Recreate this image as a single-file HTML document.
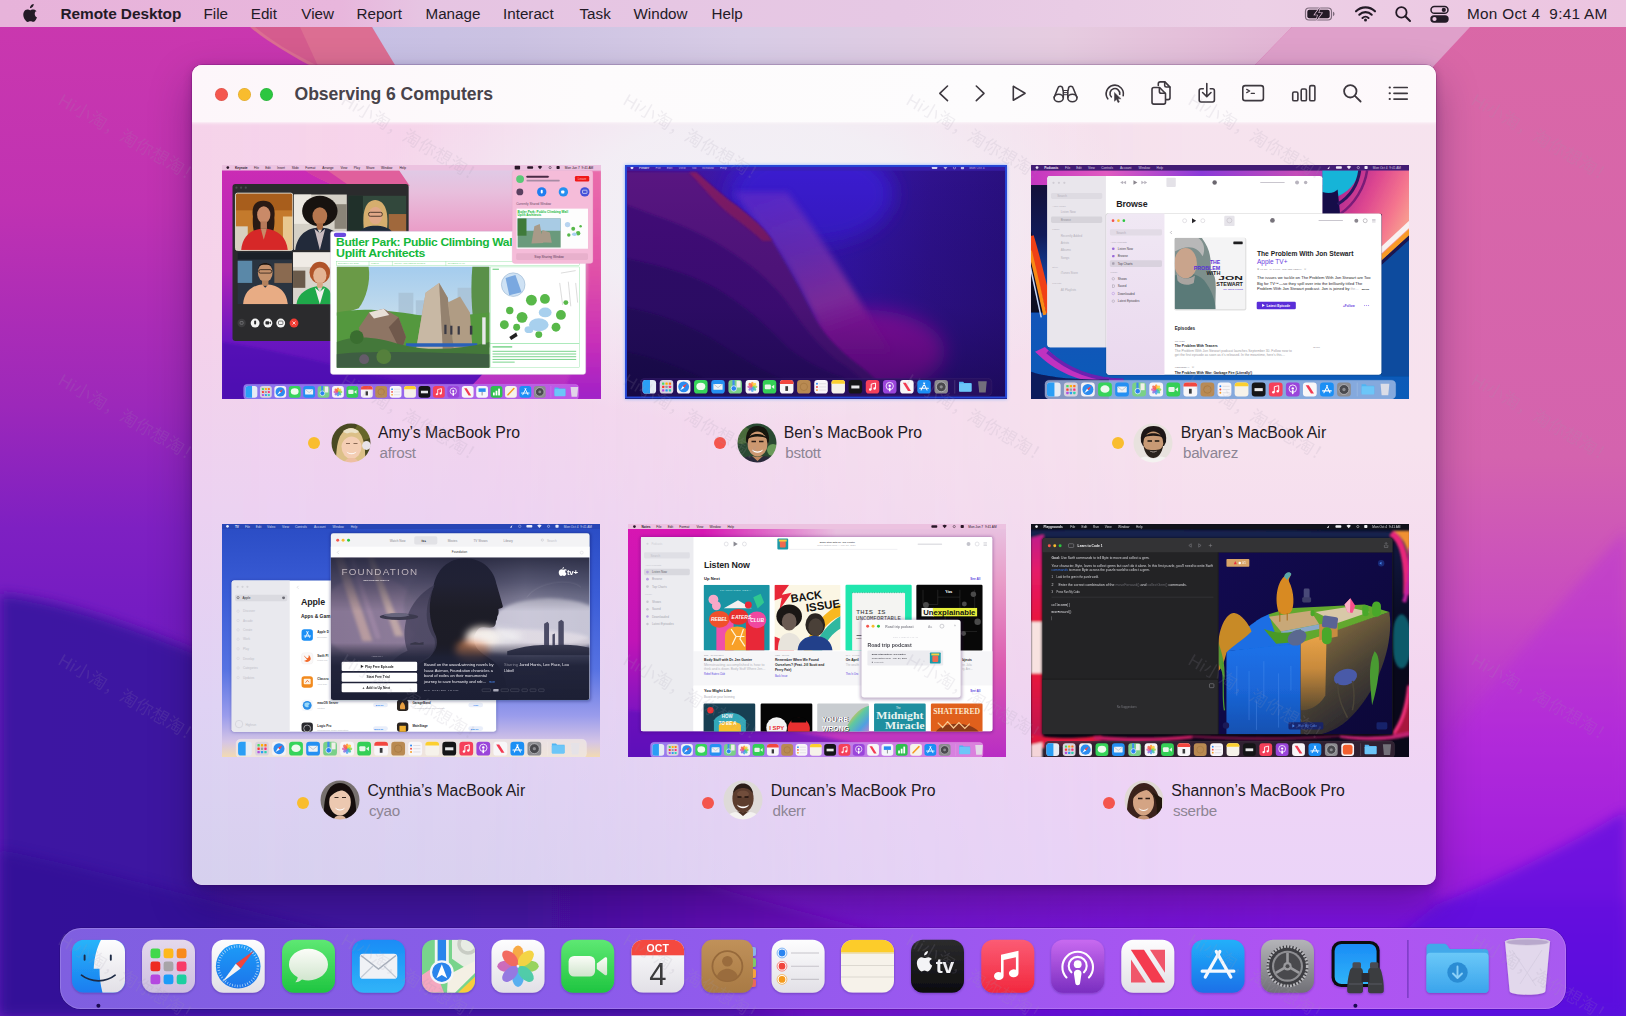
<!DOCTYPE html>
<html lang="en">
<head>
<meta charset="utf-8">
<title>Remote Desktop — Observing 6 Computers</title>
<style>
html,body{margin:0;padding:0;}
body{width:1626px;height:1016px;overflow:hidden;position:relative;background:#7a1fc0;font-family:"Liberation Sans","Noto Sans CJK SC",sans-serif;color:#1d1d1f;}
.abs{position:absolute;}
svg{display:block;}
svg{font-family:"Liberation Sans","Noto Sans CJK SC",sans-serif;}
#wall{position:absolute;left:0;top:0;width:1626px;height:1016px;}
#menubar{position:absolute;left:0;top:0;width:1626px;height:27px;background:linear-gradient(90deg,#e7b3da 0,#e8b6dc 340px,#e6c4e2 420px,#e6c8e4 900px,#ecd0e6 1250px,#ecc4e0 1626px);}
#menubar span{position:absolute;top:0;height:27px;line-height:28px;font-size:15.200px;color:#231a26;white-space:nowrap;}
#win{position:absolute;left:192px;top:65px;width:1244px;height:820px;border-radius:10px;overflow:hidden;background:linear-gradient(180deg,#f6e3ee 0,#f7e2ee 380px,#f3d6f0 620px,#eed4f6 720px,#ebd4f8 820px);box-shadow:0 0 0 .5px rgba(60,0,80,.35),0 18px 40px rgba(30,0,60,.35),0 2px 8px rgba(30,0,60,.25);}
#winL{position:absolute;left:0;top:0;width:1244px;height:820px;background:linear-gradient(180deg,#f6d3ea 0,#f5d2ea 250px,#ecd1f1 440px,#dfd2f4 640px,#d6d0ee 820px);-webkit-mask-image:linear-gradient(90deg,#000 0,rgba(0,0,0,.85) 300px,rgba(0,0,0,.35) 640px,transparent 1000px);mask-image:linear-gradient(90deg,#000 0,rgba(0,0,0,.85) 300px,rgba(0,0,0,.35) 640px,transparent 1000px);}
#winC{position:absolute;left:180px;top:-60px;width:760px;height:420px;background:radial-gradient(closest-side,rgba(242,241,246,.98) 0,rgba(242,241,246,.85) 45%,rgba(242,241,246,0) 100%);}
#tbar{position:absolute;left:0;top:0;width:1244px;height:57px;background:linear-gradient(90deg,#fdf6fa 0,#fdfbfc 400px,#fdfcfd 800px,#fdf8fb 1244px);box-shadow:0 0 3px 1px rgba(253,248,251,.9);}
.tl{position:absolute;top:22.5px;width:13px;height:13px;border-radius:50%;}
#title{position:absolute;left:102.500px;top:.800px;height:58px;line-height:57px;font-size:17.600px;font-weight:700;color:#48434a;letter-spacing:-.04px;white-space:nowrap;}
.thumb{position:absolute;overflow:hidden;}
.lbl{position:absolute;white-space:nowrap;}
.lbl .dot{position:absolute;width:12px;height:12px;border-radius:50%;}
.lbl .nm{position:absolute;font-size:15.800px;line-height:20px;color:#1f1a24;}
.lbl .us{position:absolute;font-size:15.200px;line-height:20px;color:#8d8594;letter-spacing:-.3px;}
.wm{position:absolute;font-size:17.5px;line-height:20px;color:rgba(160,154,176,.15);transform:rotate(30.200deg);transform-origin:0 0;white-space:nowrap;letter-spacing:.4px;font-family:"Liberation Sans","Noto Sans CJK SC",sans-serif;}
#wms{position:absolute;left:0;top:0;width:1626px;height:1016px;overflow:hidden;pointer-events:none;}
#dock{position:absolute;left:60px;top:927.500px;width:1505.500px;height:81.500px;border-radius:21px;background:linear-gradient(90deg,#7f5fe0 0,#8a5cea 500px,#9c58f0 900px,#b053f2 1250px,#a85af0 1506px);box-shadow:inset 0 0 0 1px rgba(255,255,255,.16),0 0 0 .5px rgba(20,0,60,.3);}
.ic{position:absolute;top:939px;width:54px;height:54px;}
</style>
</head>
<body>
<svg id="wall" viewBox="0 0 1626 1016">
<defs>
<linearGradient id="wgL" x1="0" y1="0" x2="0" y2="1">
<stop offset="0" stop-color="#cb38ae"/><stop offset=".2" stop-color="#c032b2"/><stop offset=".4" stop-color="#9c28ba"/><stop offset=".52" stop-color="#7e20c2"/><stop offset=".6" stop-color="#751cc2"/><stop offset="1" stop-color="#6a16c0"/>
</linearGradient>
<linearGradient id="wgR" x1="0" y1="0" x2="0" y2="1">
<stop offset="0" stop-color="#da68a6"/><stop offset=".45" stop-color="#d463ae"/><stop offset=".6" stop-color="#c84cc0"/><stop offset=".72" stop-color="#b22ed6"/><stop offset=".84" stop-color="#9a1cdc"/><stop offset=".92" stop-color="#7410dc"/><stop offset="1" stop-color="#5a10dc"/>
</linearGradient>
<linearGradient id="wmask" x1="0" y1="0" x2="1" y2="0">
<stop offset=".35" stop-color="#000"/><stop offset=".8" stop-color="#fff"/>
</linearGradient>
<mask id="mR"><rect width="1626" height="1016" fill="url(#wmask)"/></mask>
<filter id="b6" filterUnits="userSpaceOnUse" x="-50" y="-50" width="1726" height="1116"><feGaussianBlur stdDeviation="6"/></filter>
<filter id="b2" filterUnits="userSpaceOnUse" x="-50" y="-50" width="1726" height="1116"><feGaussianBlur stdDeviation="1.2"/></filter>
<filter id="b20" filterUnits="userSpaceOnUse" x="-50" y="-50" width="1726" height="1116"><feGaussianBlur stdDeviation="20"/></filter>
<linearGradient id="wgD" x1="0" y1="0" x2="1" y2="0">
<stop offset="0" stop-color="#3c16a2"/><stop offset=".45" stop-color="#42129f"/><stop offset=".6" stop-color="#5a10ae"/><stop offset=".75" stop-color="#6e0ebe"/><stop offset="1" stop-color="#6a10d0" stop-opacity="0"/>
</linearGradient>
<linearGradient id="wgD2" x1="0" y1="0" x2="0" y2="1">
<stop offset="0" stop-color="#3c16a2" stop-opacity="0"/><stop offset="1" stop-color="#2a1090" stop-opacity=".75"/>
</linearGradient>
<linearGradient id="wgTop" x1="0" y1="0" x2="1" y2="0">
<stop offset="0" stop-color="#c7c0e4"/><stop offset=".15" stop-color="#cbc2e2"/><stop offset=".4" stop-color="#d8cce6"/><stop offset=".75" stop-color="#e6cce0"/><stop offset="1" stop-color="#e2b4d4"/>
</linearGradient>
</defs>
<rect width="1626" height="1016" fill="url(#wgL)"/>
<rect width="1626" height="1016" fill="url(#wgR)" mask="url(#mR)"/>
<!-- dark indigo wave bottom-left -->
<path d="M0 594 C60 600 130 625 192 650 C400 730 600 860 760 900 C900 940 1000 960 1150 1016 L0 1016Z" fill="url(#wgD)" filter="url(#b6)"/>
<path d="M0 850 C100 870 200 900 330 930 C500 970 700 1000 800 1016 L0 1016Z" fill="#2e1192" opacity=".6" filter="url(#b6)"/>
<!-- right diag glow -->
<path d="M1626 530 C1560 600 1480 700 1436 760 L1436 900 L1626 900Z" fill="#b428e0" opacity=".35" filter="url(#b6)"/>
<path d="M1436 905 C1500 880 1580 840 1626 810 L1626 1016 L1300 1016Z" fill="#5a10e0" opacity=".7" filter="url(#b6)"/>
<!-- top strip features -->
<path d="M250 27 C265 40 290 55 318 70 L400 70 L372 27Z" fill="#dc6e92"/>
<path d="M255 27 C270 40 290 52 318 66 L300 27Z" fill="#d0508c" opacity=".6"/>
<path d="M372 27 L398 70 L1250 70 L1292 27Z" fill="url(#wgTop)"/>
<path d="M1292 27 L1250 70 L1430 70 L1470 27Z" fill="#dfa0ca"/>
</svg>
<div id="menubar">
<svg class="abs" style="left:22px;top:3.500px" width="16.800" height="20" viewBox="0 0 16 19"><path fill="#231a26" d="M11.1 0c.1 1-.3 2-.9 2.700-.7.800-1.700 1.300-2.600 1.200-.1-1 .4-2 .9-2.600C9.200.5 10.300.05 11.100 0zM13.900 6.300c-.1.100-1.800 1-1.800 3.100 0 2.400 2.100 3.200 2.200 3.300 0 .1-.3 1.200-1.100 2.300-.7 1-1.400 2-2.500 2s-1.400-.6-2.600-.6c-1.200 0-1.600.6-2.600.7-1.100 0-1.900-1.100-2.600-2.100C1.500 13 .5 9.700 1.900 7.300c.7-1.200 1.900-1.900 3.200-2 1 0 2 .7 2.600.7.600 0 1.800-.8 3-.7.500 0 2 .2 3 1.600z"/></svg>
<span style="left:60.5px;font-weight:700;font-size:15.400px;letter-spacing:-.05px">Remote Desktop</span>
<span style="left:203.500px">File</span>
<span style="left:250.800px">Edit</span>
<span style="left:301.300px">View</span>
<span style="left:356.500px">Report</span>
<span style="left:425.500px">Manage</span>
<span style="left:503px">Interact</span>
<span style="left:579.500px">Task</span>
<span style="left:633.500px">Window</span>
<span style="left:711.500px">Help</span>
<!-- battery -->
<svg class="abs" style="left:1304px;top:6px" width="34" height="16" viewBox="0 0 34 16"><rect x="1.500" y="2" width="26" height="12" rx="3.500" fill="none" stroke="#231a26" stroke-opacity=".55" stroke-width="1.200"/><rect x="3.300" y="3.800" width="22.400" height="8.400" rx="2" fill="#231a26"/><path d="M29 5.800v4.400c.9-.3 1.500-1.200 1.500-2.200s-.6-1.900-1.500-2.200z" fill="#231a26" fill-opacity=".55"/><path d="M15.800 1.500 10.600 8.700h3.300l-1.600 5.800 5.500-7.400h-3.400z" fill="#231a26" stroke="#e9c8e2" stroke-width="1.300" paint-order="stroke"/></svg>
<!-- wifi -->
<svg class="abs" style="left:1354px;top:5px" width="23" height="17" viewBox="0 0 23 17"><g fill="none" stroke="#231a26" stroke-width="2.100" stroke-linecap="round"><path d="M2 6.300a13.400 13.400 0 0 1 19 0"/><path d="M5.300 9.700a8.800 8.800 0 0 1 12.400 0"/><path d="M8.500 12.900a4.300 4.300 0 0 1 6 0"/></g><circle cx="11.500" cy="15" r="1.500" fill="#231a26"/></svg>
<!-- search -->
<svg class="abs" style="left:1394px;top:5px" width="18" height="18" viewBox="0 0 18 18"><circle cx="7.400" cy="7.400" r="5.200" fill="none" stroke="#231a26" stroke-width="1.800"/><path d="M11.300 11.300 16 16" stroke="#231a26" stroke-width="2" stroke-linecap="round"/></svg>
<!-- control center -->
<svg class="abs" style="left:1430px;top:5px" width="19" height="18" viewBox="0 0 19 18"><rect x="1" y="1.500" width="17" height="6.800" rx="3.400" fill="none" stroke="#231a26" stroke-width="1.500"/><circle cx="13.800" cy="4.900" r="2.100" fill="#231a26"/><rect x=".3" y="10.300" width="18.400" height="7.400" rx="3.700" fill="#231a26"/><circle cx="4.500" cy="14" r="2.100" fill="#ecc8e2"/></svg>
<span style="left:1467px;font-size:15.300px;letter-spacing:.3px">Mon Oct 4&nbsp; 9:41 AM</span>
</div>
<div id="win">
<div id="winL"></div><div id="winC"></div>
<div id="tbar">
<div class="tl" style="left:23px;background:#f4574e;box-shadow:inset 0 0 0 .5px rgba(0,0,0,.12)"></div>
<div class="tl" style="left:45.500px;background:#f8bc2e;box-shadow:inset 0 0 0 .5px rgba(0,0,0,.12)"></div>
<div class="tl" style="left:68px;background:#2cc640;box-shadow:inset 0 0 0 .5px rgba(0,0,0,.12)"></div>
<div id="title">Observing 6 Computers</div>
<svg class="abs" style="left:730px;top:10px" width="500" height="40" viewBox="922 75 500 40" fill="none" stroke="#3d383f" stroke-width="1.600" stroke-linecap="round" stroke-linejoin="round">
<path d="M947.500 86 939.800 93.300 947.500 100.600"/>
<path d="M976.300 86 984 93.300 976.300 100.600"/>
<path d="M1013.300 86.300v14l11.800-7z"/>
<!-- binoculars -->
<g><ellipse cx="1058.700" cy="98" rx="4.600" ry="3.700"/><ellipse cx="1072.400" cy="98" rx="4.600" ry="3.700"/><path d="M1054.200 97.200 1058.300 87.200c.4-1.300 3.600-1.300 4 0l1 4.500v5.800"/><path d="M1076.900 97.200 1072.800 87.200c-.4-1.300-3.600-1.300-4 0l-1 4.500v5.800"/><path d="M1063.400 90.500h4.400M1063.400 92.600h4.400M1063.400 94.700h4.400" stroke-width="1"/></g>
<!-- control cursor -->
<g><path d="M1107.800 98.800a8.600 8.600 0 1 1 15.400-3.200"/><path d="M1111.300 96.800a4.900 4.900 0 1 1 8.400-2.500"/><path d="M1114.500 92.800v8.400l2-1.900 1.500 3.300 1.400-.6-1.500-3.200h2.800z" fill="#3d383f" stroke-width=".5"/></g>
<!-- copy -->
<g><path d="M1158.300 85.500v-1.700c0-1.100.8-1.900 1.900-1.900h4.700l5.100 5.200v10.600c0 1.100-.8 1.900-1.900 1.900h-1.900"/><path d="M1164.700 82v3.400c0 .9.700 1.600 1.600 1.600h3.500"/><path d="M1153.900 87.500h5.700l5.900 6v8.700c0 1.100-.8 1.900-1.900 1.900h-9.700c-1.100 0-1.900-.8-1.900-1.900V89.400c0-1.100.8-1.900 1.900-1.900z" fill="#fcf7fb"/><path d="M1159.400 87.700v3.800c0 1 .8 1.800 1.800 1.800h4"/></g>
<!-- download -->
<g><path d="M1203.300 88.800h-2.200c-1.100 0-1.900.8-1.900 1.900v9.400c0 1.100.8 1.900 1.900 1.900h11.400c1.100 0 1.900-.8 1.900-1.900v-9.400c0-1.100-.8-1.900-1.900-1.900h-2.200"/><path d="M1206.800 83.500v12.800M1202.600 92.500l4.200 4.100 4.200-4.100"/></g>
<!-- terminal -->
<g><rect x="1242.800" y="85.600" width="20.600" height="15" rx="2.400"/><path d="M1246.700 89.400 1249.700 91 1246.700 92.600M1251.200 93.400h3.200" stroke-width="1.200"/></g>
<!-- bars -->
<g><rect x="1292.700" y="92" width="5.200" height="8.800" rx="1.400"/><rect x="1301.200" y="89" width="5.200" height="11.800" rx="1.400"/><rect x="1309.700" y="85.600" width="5.200" height="15.200" rx="1.400"/></g>
<!-- search -->
<g stroke-width="1.800"><circle cx="1350.300" cy="91.300" r="6.200"/><path d="M1354.900 95.900 1360.600 101.500"/></g>
<!-- list -->
<g stroke-width="1.700"><path d="M1394 87.500h13.200M1394 93.300h13.200M1394 99.100h13.200"/><path d="M1389.600 87.500h.3M1389.600 93.300h.3M1389.600 99.100h.3" stroke-width="2"/></g>
</svg>
</div>
<div class="thumb" style="left:30.400px;top:100px;width:379px;height:233.500px;">
<svg width="379" height="233.500" viewBox="42.300 40.650 1540.600 949.200" preserveAspectRatio="none">
<defs>
<linearGradient id="t1a" x1="0" y1="0" x2="0" y2="1"><stop offset="0" stop-color="#cc2cb4"/><stop offset=".45" stop-color="#b024b8"/><stop offset=".75" stop-color="#6a16c0"/><stop offset="1" stop-color="#5210b4"/></linearGradient>
<linearGradient id="t1b" gradientUnits="userSpaceOnUse" x1="0" y1="40" x2="0" y2="992"><stop offset="0" stop-color="#decce8"/><stop offset=".12" stop-color="#e8bedc"/><stop offset=".28" stop-color="#ea9ec8"/><stop offset=".5" stop-color="#e070b0"/><stop offset=".75" stop-color="#cc48b8"/><stop offset="1" stop-color="#b028c8"/></linearGradient>
<linearGradient id="t1sky" x1="0" y1="0" x2="0" y2="1"><stop offset="0" stop-color="#a4ccee"/><stop offset=".5" stop-color="#c4dcec"/><stop offset="1" stop-color="#a4c0b4"/></linearGradient>
<linearGradient id="t1dk" x1="0" y1="0" x2="1" y2="0"><stop offset="0" stop-color="#8e80f4"/><stop offset=".5" stop-color="#a070f0"/><stop offset="1" stop-color="#c45ce8"/></linearGradient>
<linearGradient id="t1rs" gradientUnits="userSpaceOnUse" x1="0" y1="62" x2="0" y2="992"><stop offset="0" stop-color="#ea6caa"/><stop offset=".45" stop-color="#e050a8"/><stop offset=".75" stop-color="#c830b8"/><stop offset="1" stop-color="#a020c8"/></linearGradient>
<filter id="t1f" filterUnits="userSpaceOnUse" x="0" y="0" width="1640" height="1030"><feGaussianBlur stdDeviation="5"/></filter>
<filter id="t1g" filterUnits="userSpaceOnUse" x="0" y="0" width="1640" height="1030"><feGaussianBlur stdDeviation="2.500"/></filter>
<clipPath id="t1c1"><rect x="97" y="155" width="233" height="233" rx="8"/></clipPath>
<clipPath id="t1c2"><rect x="335" y="160" width="215" height="226"/></clipPath>
<clipPath id="t1c3"><rect x="555" y="165" width="237" height="150"/></clipPath>
<clipPath id="t1c4"><rect x="105" y="395" width="222" height="212"/></clipPath>
<clipPath id="t1c5"><rect x="331" y="395" width="155" height="212"/></clipPath>
<clipPath id="t1c6"><rect x="508" y="453" width="622" height="412"/></clipPath>
</defs>
<rect x="40" y="40" width="1546" height="952" fill="url(#t1a)"/>
<path d="M420 60 C460 100 520 120 600 200 C700 300 780 330 860 350 L1586 350 L1586 40 L420 40Z" fill="url(#t1b)"/>
<path d="M860 300 L1586 300 L1586 992 L1000 992 C1100 900 1200 800 1250 640 C1100 560 950 450 860 300Z" fill="url(#t1b)"/>
<path d="M380 62 C420 90 460 105 500 125 L805 125 L762 62Z" fill="#e0609c"/><path d="M380 62 C420 90 460 105 500 125 L560 125 L470 62Z" fill="#d23ca4"/>
<path d="M42 760 C300 800 700 900 1000 992 L42 992Z" fill="#4a0eb0" opacity=".6" filter="url(#t1f)"/>
<path d="M1500 62 L1586 62 L1586 992 L1420 992 C1500 800 1540 600 1530 440Z" fill="url(#t1rs)" filter="url(#t1f)"/>
<!-- menubar -->
<rect x="40" y="40" width="1546" height="23" fill="#ecc2e0"/>
<g font-size="13" fill="#2a1828"><circle cx="66" cy="51" r="5.500"/><text x="95" y="56" font-weight="700">Keynote</text><text x="172" y="56">File</text><text x="218" y="56">Edit</text><text x="266" y="56">Insert</text><text x="326" y="56">Slide</text><text x="381" y="56">Format</text><text x="450" y="56">Arrange</text><text x="524" y="56">View</text><text x="578" y="56">Play</text><text x="628" y="56">Share</text><text x="689" y="56">Window</text><text x="764" y="56">Help</text><text x="1436" y="56">Mon Jun 7&#160; 9:41 AM</text><rect x="1232" y="44" width="22" height="15" rx="3"/><rect x="1283" y="46" width="24" height="10" rx="3"/><path d="M1326 48a13 13 0 0 1 18 0l-9 10z"/><circle cx="1376" cy="51" r="4.500" fill="none" stroke="#2a1828" stroke-width="2"/><rect x="1402" y="45" width="13" height="12" rx="3"/></g>
<!-- FaceTime window -->
<rect x="85" y="118" width="716" height="638" rx="12" fill="#2b2b2d"/>
<circle cx="101" cy="133" r="4.500" fill="#4a4a4c"/><circle cx="120" cy="133" r="4.500" fill="#4a4a4c"/><circle cx="139" cy="133" r="4.500" fill="#4a4a4c"/>
<g clip-path="url(#t1c1)"><rect x="97" y="155" width="233" height="233" fill="#c47a2c"/><rect x="97" y="155" width="233" height="70" fill="#a85e1c"/><rect x="97" y="290" width="50" height="98" fill="#d8d0c0"/><rect x="290" y="250" width="40" height="138" fill="#e8c890"/>
<path d="M168 250 C160 200 185 185 212 186 C240 186 262 205 255 255 C258 290 250 320 240 335 L182 335 C172 320 165 290 168 250Z" fill="#2a1a14"/><ellipse cx="212" cy="243" rx="27" ry="35" fill="#c98a68"/><rect x="199" y="270" width="26" height="30" fill="#b87a5a"/>
<path d="M120 388 C125 330 160 305 200 300 L212 330 L225 300 C265 305 305 330 310 388Z" fill="#d62828"/><path d="M200 300 L212 345 L225 300Z" fill="#c98a68"/></g>
<rect x="97" y="155" width="233" height="233" rx="8" fill="none" stroke="#e8e4dc" stroke-width="3.500"/>
<g clip-path="url(#t1c2)"><rect x="335" y="160" width="215" height="226" fill="#d4d0c6"/><rect x="335" y="160" width="70" height="120" fill="#ece8e0"/><rect x="500" y="200" width="50" height="100" fill="#8a8478"/>
<ellipse cx="440" cy="228" rx="72" ry="62" fill="#17120f"/><ellipse cx="440" cy="248" rx="30" ry="36" fill="#b5764e"/><rect x="427" y="278" width="26" height="26" fill="#a56842"/>
<path d="M340 386 C350 320 390 300 428 296 L440 320 L452 296 C495 300 535 322 545 386Z" fill="#222a3a"/><path d="M418 300 L440 386 L462 300 L440 318Z" fill="#c8bcc0"/></g>
<g clip-path="url(#t1c3)"><rect x="555" y="165" width="237" height="150" fill="#32483c"/><rect x="555" y="165" width="60" height="150" fill="#20302a"/><rect x="720" y="240" width="72" height="75" fill="#a0683c"/>
<path d="M620 310 C610 230 625 185 665 183 C705 185 722 230 712 310Z" fill="#d6ae6e"/><ellipse cx="666" cy="246" rx="28" ry="36" fill="#e0a888"/><rect x="638" y="233" width="56" height="16" rx="7" fill="none" stroke="#3a2a20" stroke-width="3.500"/><path d="M600 315 C610 295 640 288 666 288 C692 288 725 295 735 315Z" fill="#1e2a3a"/></g>
<g clip-path="url(#t1c4)"><rect x="105" y="395" width="222" height="212" fill="#2a3440"/><rect x="105" y="430" width="60" height="90" fill="#5a88a8"/><rect x="255" y="440" width="72" height="80" fill="#8a6a50"/><rect x="105" y="395" width="222" height="30" fill="#1a2028"/>
<ellipse cx="218" cy="478" rx="30" ry="38" fill="#c4916c"/><path d="M188 465 C188 430 248 430 248 465 L244 452 C230 444 206 444 192 452Z" fill="#1a1410"/><rect x="192" y="466" width="52" height="14" rx="6" fill="none" stroke="#1a1410" stroke-width="3"/><rect x="205" y="510" width="26" height="22" fill="#b4815c"/>
<path d="M128 607 C132 550 170 530 205 526 L218 540 L231 526 C268 530 305 550 310 607Z" fill="#e8ac84"/></g>
<g clip-path="url(#t1c5)"><rect x="331" y="395" width="155" height="212" fill="#d8d4cc"/><rect x="331" y="395" width="155" height="60" fill="#f0ece6"/><rect x="331" y="470" width="50" height="70" fill="#6a5a4a"/>
<ellipse cx="440" cy="478" rx="42" ry="44" fill="#b0542a"/><ellipse cx="440" cy="490" rx="27" ry="33" fill="#e4b494"/><rect x="428" y="518" width="24" height="22" fill="#d8a684"/>
<path d="M345 607 C350 560 395 540 428 534 L440 560 L452 534 C480 540 490 560 490 607Z" fill="#1fa84a"/><path d="M420 540 L440 607 L460 540 L440 556Z" fill="#f2f0ee"/></g>
<circle cx="122" cy="683" r="17" fill="#3c3c3e"/><circle cx="177" cy="683" r="18" fill="#f4f4f4"/><circle cx="229" cy="683" r="18" fill="#f4f4f4"/><circle cx="281" cy="683" r="18" fill="#f4f4f4"/><circle cx="335" cy="683" r="18" fill="#f03c34"/>
<g fill="#2b2b2d"><rect x="173" y="673" width="8" height="16" rx="4"/><rect x="219" y="676" width="15" height="13" rx="3"/><path d="M234 682l7-5v11z"/><rect x="272" y="675" width="18" height="14" rx="3" fill="none" stroke="#2b2b2d" stroke-width="2.500"/></g><path d="M329 677l12 12M341 677l-12 12" stroke="#fff" stroke-width="3"/><rect x="116" y="677" width="12" height="11" rx="2" fill="none" stroke="#9a9a9e" stroke-width="2"/>
<!-- Keynote window -->
<rect x="483" y="310" width="1038" height="582" rx="10" fill="#fff" stroke="#c8b0d0" stroke-width="1.500"/>
<rect x="497" y="316" width="50" height="17" rx="8" fill="#6a48e0"/>
<g font-weight="700" fill="#16b83a" font-size="43" letter-spacing="-1.200"><text x="506" y="371" textLength="716" lengthAdjust="spacingAndGlyphs">Butler Park: Public Climbing Wal</text><text x="506" y="414" textLength="362" lengthAdjust="spacingAndGlyphs">Uplift Architects</text></g>
<rect x="1222" y="310" width="300" height="130" fill="#fff"/>
<g fill="none" stroke="#7adb90" stroke-width="1.500"><rect x="508" y="432" width="988" height="18"/><path d="M640 432v18M735 432v18M952 432v18"/><rect x="1135" y="455" width="361" height="310"/><rect x="1135" y="765" width="361" height="100"/></g>
<g font-size="9" fill="#6ad084"><text x="514" y="445">BUTLER PARK 2021</text><text x="648" y="445">PUBLIC</text><text x="742" y="445">UPLIFT ARCHITECTS STUDIO</text><text x="960" y="445">CLIMBING WALL</text></g>
<g clip-path="url(#t1c6)"><rect x="508" y="453" width="622" height="412" fill="url(#t1sky)"/>
<path d="M760 560h60v120h-60zM830 590h50v100h-50zM1000 540h70v160h-70zM940 600h50v100h-50z" fill="#a8c0d4" opacity=".8"/>
<path d="M508 453h130c10 60-10 130-40 170l-90 30z" fill="#6a9a46" filter="url(#t1g)"/><path d="M1060 453h70v330h-50c-20-100-30-220-20-330z" fill="#5a9048" filter="url(#t1g)"/>
<path d="M508 640c100-20 200-10 330 10c100 10 200 0 292-10v225H508z" fill="#54983e"/>
<path d="M600 700 L640 640 L700 625 L760 660 L790 740 L770 800 L600 790Z" fill="#8e7564"/><path d="M640 640 L700 625 L722 650 L660 665Z" fill="#e8e0d8"/><path d="M720 700L760 660L790 740L770 800Z" fill="#70594c"/>
<path d="M830 800 L870 560 L925 520 L960 580 L985 790Z" fill="#b8a694"/><path d="M870 560 L925 520 L940 790 L830 800Z" fill="#c8b8a4"/><path d="M925 520L960 580L985 790L940 790Z" fill="#94826f"/>
<path d="M960 600 L1010 575 L1050 640 L1060 780 L985 790Z" fill="#b09c84"/>
<path d="M790 765h290v14H790z" fill="#2a60b8"/>
<path d="M508 760c80-30 160-20 260 10c120 30 240 20 362-10v105H508z" fill="#44783a"/><path d="M508 810c100-14 300-10 622 0v55H508z" fill="#3e5e42"/>
<circle cx="590" cy="740" r="28" fill="#3a6e30"/><circle cx="700" cy="820" r="30" fill="#55803c"/><circle cx="620" cy="830" r="20" fill="#8a5a90" opacity=".5"/>
<g fill="#3a3a44"><rect x="946" y="690" width="9" height="38"/><rect x="970" y="694" width="9" height="36"/><rect x="1000" y="696" width="9" height="34"/><rect x="1050" y="694" width="10" height="36"/><rect x="1100" y="660" width="14" height="110" fill="#e8e8ea"/></g>
</g>
<!-- site plan -->
<g filter="url(#t1g)"><circle cx="1226" cy="527" r="48" fill="#cfe2f4" stroke="#8aa8c8" stroke-width="2"/><path d="M1195 500l40-12 25 70-50 12z" fill="#7aa8e0"/>
<g fill="#58b84a"><circle cx="1300" cy="590" r="22"/><circle cx="1355" cy="585" r="20"/><circle cx="1212" cy="632" r="15"/><circle cx="1262" cy="660" r="22"/><circle cx="1420" cy="650" r="20"/><circle cx="1190" cy="690" r="18"/><circle cx="1400" cy="700" r="18"/><circle cx="1330" cy="730" r="14"/><circle cx="1240" cy="700" r="14"/><circle cx="1440" cy="600" r="10"/></g>
<g fill="#a8d0ee"><ellipse cx="1356" cy="640" rx="26" ry="20"/><ellipse cx="1330" cy="690" rx="40" ry="26"/><ellipse cx="1290" cy="710" rx="18" ry="14"/></g>
<path d="M1210 740l28-18 6 14-26 16z" fill="#222"/><path d="M1415 520l12 90M1450 515l10 100M1480 520l8 80M1420 480l60-10" stroke="#b8b8b8" stroke-width="2" fill="none"/></g>
<g fill="#7ad48c"><rect x="1142" y="777" width="80" height="6"/><rect x="1142" y="796" width="340" height="4"/><rect x="1142" y="807" width="340" height="4"/><rect x="1142" y="818" width="340" height="4"/><rect x="1142" y="829" width="340" height="4"/><rect x="1142" y="840" width="90" height="4"/><rect x="1142" y="462" width="26" height="5"/></g>
<!-- SharePlay popup -->
<rect x="1222" y="63" width="328" height="378" rx="10" fill="#f5bcd9" stroke="#e8a4c8" stroke-width="1"/>
<circle cx="1254" cy="98" r="16" fill="#5cc878"/><rect x="1280" y="84" width="90" height="8" rx="2" fill="#4a2a44"/><rect x="1280" y="101" width="135" height="7" rx="2" fill="#a88aa4"/>
<rect x="1477" y="85" width="58" height="23" rx="5" fill="#f01818"/><text x="1488" y="102" font-size="13" fill="#fbb">Leave</text>
<circle cx="1253" cy="150" r="14" fill="#5a4060"/><circle cx="1342" cy="150" r="19" fill="#1f7df0"/><circle cx="1430" cy="150" r="19" fill="#2490f0"/><circle cx="1517" cy="150" r="19" fill="#4450d8"/><rect x="1338" y="141" width="8" height="15" rx="4" fill="#fff"/><rect x="1421" y="144" width="13" height="12" rx="3" fill="#fff"/><rect x="1508" y="143" width="18" height="13" rx="2" fill="none" stroke="#fff" stroke-width="2.500"/>
<text x="1238" y="203" font-size="12.500" fill="#6a4a68">Currently Shared Window</text>
<rect x="1240" y="218" width="290" height="163" fill="#fdfdfd"/><g font-weight="700" fill="#16b83a" font-size="12.500"><text x="1244" y="236" textLength="205" lengthAdjust="spacingAndGlyphs">Butler Park: Public Climbing Wall</text><text x="1244" y="249">Uplift Architects</text></g>
<rect x="1244" y="258" width="175" height="118" fill="#6a9a7c"/><rect x="1244" y="258" width="175" height="50" fill="#a8cbe4"/><path d="M1300 360l12-70 22-10 14 78zM1335 355l10-50 30 10 8 42z" fill="#a89a88"/><rect x="1244" y="258" width="36" height="70" fill="#3f7a3a"/>
<g fill="#58b84a"><circle cx="1470" cy="300" r="8"/><circle cx="1490" cy="318" r="9"/><circle cx="1452" cy="325" r="7"/><circle cx="1500" cy="290" r="5"/></g><circle cx="1447" cy="283" r="11" fill="#b8d4f0"/><ellipse cx="1475" cy="322" rx="10" ry="7" fill="#a8d0ee"/>
<rect x="1238" y="399" width="292" height="28" rx="6" fill="#e8b0cc"/><text x="1312" y="418" font-size="12.500" fill="#5a3a58">Stop Sharing Window</text>
<!-- dock -->
<rect x="130" y="932" width="1362" height="62" rx="15" fill="url(#t1dk)" fill-opacity=".9" stroke="#fff" stroke-opacity=".3" stroke-width="1.500"/>
<rect x="138" y="939" width="48" height="48" rx="11" fill="#e6ecf4"/><path d="M149 939h15.4v48h-15.4a11 11 0 0 1 -11 -11v-25.9a11 11 0 0 1 11 -11z" fill="#2a9ef5"/><rect x="196.6" y="939" width="48" height="48" rx="11" fill="#d9d3de"/><rect x="204.8" y="947.2" width="8.2" height="8.2" rx="1.9" fill="#4cd964"/><rect x="216.8" y="947.2" width="8.2" height="8.2" rx="1.9" fill="#ffb400"/><rect x="228.8" y="947.2" width="8.2" height="8.2" rx="1.9" fill="#ff7a1a"/><rect x="204.8" y="959.2" width="8.2" height="8.2" rx="1.9" fill="#ff3b30"/><rect x="216.8" y="959.2" width="8.2" height="8.2" rx="1.9" fill="#9a9aa0"/><rect x="228.8" y="959.2" width="8.2" height="8.2" rx="1.9" fill="#ff2d78"/><rect x="204.8" y="971.2" width="8.2" height="8.2" rx="1.9" fill="#b150e0"/><rect x="216.8" y="971.2" width="8.2" height="8.2" rx="1.9" fill="#2a9ef5"/><rect x="228.8" y="971.2" width="8.2" height="8.2" rx="1.9" fill="#30d0b0"/><rect x="255.2" y="939" width="48" height="48" rx="11" fill="#f2f2f6"/><circle cx="279.2" cy="963" r="19.2" fill="#2b8cf0"/><path d="M267.2 975L276.3 960.1L282.1 965.9z" fill="#fff"/><path d="M291.2 951L276.3 960.1L282.1 965.9z" fill="#ff4040"/><rect x="313.8" y="939" width="48" height="48" rx="11" fill="#36d45a"/><ellipse cx="337.8" cy="961.6" rx="15.8" ry="13" fill="#eefaee"/><rect x="372.4" y="939" width="48" height="48" rx="11" fill="#2590f2"/><rect x="380.1" y="952.4" width="32.6" height="21.1" rx="2.4" fill="#eef2f6"/><path d="M381 953.4L396.4 965.9L411.8 953.4" fill="none" stroke="#9aa6b4" stroke-width="1.9"/><rect x="431" y="939" width="48" height="48" rx="11" fill="#7ad088"/><path d="M459.8 941.4h14.4v24h-14.4z" fill="#f0efe8"/><path d="M445.4 939h7.7v24h-7.7z" fill="#3c8cf0"/><circle cx="450.2" cy="968.8" r="9.6" fill="#2a84f0" stroke="#fff" stroke-width="2.4"/><rect x="489.6" y="939" width="48" height="48" rx="11" fill="#f7f5f7"/><ellipse cx="513.6" cy="953.9" rx="9.1" ry="5.3" fill="#ff9a30" fill-opacity=".85" transform="rotate(-90 513.6 953.9)"/><ellipse cx="520" cy="956.6" rx="9.1" ry="5.3" fill="#ffd030" fill-opacity=".85" transform="rotate(-45 520 956.6)"/><ellipse cx="522.7" cy="963" rx="9.1" ry="5.3" fill="#9bd84a" fill-opacity=".85" transform="rotate(0 522.7 963)"/><ellipse cx="520" cy="969.4" rx="9.1" ry="5.3" fill="#40c8a0" fill-opacity=".85" transform="rotate(45 520 969.4)"/><ellipse cx="513.6" cy="972.1" rx="9.1" ry="5.3" fill="#48a0f0" fill-opacity=".85" transform="rotate(90 513.6 972.1)"/><ellipse cx="507.2" cy="969.4" rx="9.1" ry="5.3" fill="#8a70e0" fill-opacity=".85" transform="rotate(135 507.2 969.4)"/><ellipse cx="504.5" cy="963" rx="9.1" ry="5.3" fill="#e060a8" fill-opacity=".85" transform="rotate(180 504.5 963)"/><ellipse cx="507.2" cy="956.6" rx="9.1" ry="5.3" fill="#f46048" fill-opacity=".85" transform="rotate(225 507.2 956.6)"/><rect x="548.2" y="939" width="48" height="48" rx="11" fill="#34cf56"/><rect x="555.4" y="954.4" width="21.6" height="17.3" rx="3.8" fill="#e8f6ea"/><path d="M578.9 963L589 955.3V970.7z" fill="#e8f6ea"/><rect x="606.8" y="939" width="48" height="48" rx="11" fill="#f8f6f8"/><path d="M606.8 950a11 11 0 0 1 11 -11h25.9a11 11 0 0 1 11 11v2.9h-48z" fill="#f2473f"/><rect x="626" y="960.6" width="9.6" height="16.8" fill="#3a3a3c"/><rect x="665.4" y="939" width="48" height="48" rx="11" fill="#b98a52"/><circle cx="689.4" cy="963" r="13" fill="none" stroke="#a37640" stroke-width="2.4"/><rect x="724" y="939" width="48" height="48" rx="11" fill="#f8f6f9"/><circle cx="733.6" cy="952" r="3.4" fill="#2a84f0"/><path d="M741.3 952h25" stroke="#c8c6cc" stroke-width="1.7"/><circle cx="733.6" cy="963.2" r="3.4" fill="#f0483e"/><path d="M741.3 963.2h25" stroke="#c8c6cc" stroke-width="1.7"/><circle cx="733.6" cy="974.5" r="3.4" fill="#f59a23"/><path d="M741.3 974.5h25" stroke="#c8c6cc" stroke-width="1.7"/><rect x="782.6" y="939" width="48" height="48" rx="11" fill="#f6f2ea"/><path d="M782.6 950a11 11 0 0 1 11 -11h25.9a11 11 0 0 1 11 11v1.9h-48z" fill="#fccf2f"/><rect x="841.2" y="939" width="48" height="48" rx="11" fill="#151517"/><rect x="850.8" y="958.2" width="28.8" height="10.6" fill="#e8e8ea"/><rect x="899.8" y="939" width="48" height="48" rx="11" fill="#f5405a"/><path d="M919 972.6V953.4L934.4 949.6V968.8" fill="none" stroke="#fff" stroke-width="3.4"/><circle cx="915.6" cy="972.6" r="4.3" fill="#fff"/><circle cx="931" cy="969.2" r="4.3" fill="#fff"/><rect x="958.4" y="939" width="48" height="48" rx="11" fill="#9a45da"/><circle cx="982.4" cy="960.1" r="13" fill="none" stroke="#fff" stroke-width="2.9"/><circle cx="982.4" cy="959.2" r="4.3" fill="#fff"/><rect x="979.5" y="964.9" width="5.8" height="14.4" rx="2.9" fill="#fff"/><rect x="1017" y="939" width="48" height="48" rx="11" fill="#f8f6f8"/><path d="M1026.6 948.6h10.6L1055.4 977.4h-10.6z" fill="#f23b52"/><rect x="1075.6" y="939" width="48" height="48" rx="11" fill="#f4f6fa"/><rect x="1085.2" y="948.6" width="28.8" height="14.4" fill="#2a8cf0"/><rect x="1097.7" y="963" width="3.8" height="14.4" fill="#8a8a90"/><rect x="1134.2" y="939" width="48" height="48" rx="11" fill="#2fc04e"/><rect x="1143.8" y="965.4" width="7.2" height="12" fill="#fff"/><rect x="1154.4" y="958.2" width="7.2" height="19.2" fill="#fff"/><rect x="1164.9" y="949.6" width="7.2" height="27.8" fill="#fff"/><rect x="1192.8" y="939" width="48" height="48" rx="11" fill="#f6f2ea"/><path d="M1204.8 975L1228.8 949.6" stroke="#f59a23" stroke-width="6.2" stroke-linecap="round"/><rect x="1251.4" y="939" width="48" height="48" rx="11" fill="#1b8ff5"/><path d="M1274 949.6L1286 974.5M1277.8 949.6L1264.8 974.5M1260 967.8h30.7" stroke="#fff" stroke-width="3.6" fill="none" stroke-linecap="round"/><rect x="1310" y="939" width="48" height="48" rx="11" fill="#8c8c90"/><circle cx="1334" cy="963" r="17.3" fill="#4a4a4e" stroke="#c8c8cc" stroke-width="2.4"/><circle cx="1334" cy="963" r="5.8" fill="#8c8c90"/><path d="M1379.1 939v48" stroke="#fff" stroke-opacity=".35" stroke-width="1.4"/><path d="M1394 944.8h14.4l3.8 4.8h25.9v28.8h-44.2z" fill="#4fb4f2"/><rect x="1394" y="951.5" width="44.2" height="28.8" rx="2.9" fill="#6cc6f8"/><path d="M1459.3 942.8h30.7l-3.8 40.3h-23z" fill="#e4e2e8" fill-opacity=".9"/>
</svg>
</div>
<div class="thumb" style="left:433px;top:100px;width:382px;height:233.5px;box-shadow:0 0 3px rgba(120,170,255,.9);">
<svg width="382" height="233.500" viewBox="40.650 40.650 1552.800 949.200" preserveAspectRatio="none">
<defs>
<linearGradient id="t2a" x1="0" y1="0" x2="1" y2="0"><stop offset="0" stop-color="#4a1280"/><stop offset=".3" stop-color="#3a18b4"/><stop offset=".55" stop-color="#3616b0"/><stop offset=".8" stop-color="#30128e"/><stop offset="1" stop-color="#2a1080"/></linearGradient>
<linearGradient id="t2b" x1="0" y1="0" x2="0" y2="1"><stop offset="0" stop-color="#000040" stop-opacity="0"/><stop offset=".6" stop-color="#1a0850" stop-opacity=".25"/><stop offset="1" stop-color="#120640" stop-opacity=".6"/></linearGradient>
<linearGradient id="t2c" x1="0" y1="0" x2=".35" y2="1"><stop offset="0" stop-color="#5a2ad0"/><stop offset=".5" stop-color="#7a34c0"/><stop offset=".8" stop-color="#a238b0"/><stop offset="1" stop-color="#9a14a8"/></linearGradient>
<filter id="t2f" filterUnits="userSpaceOnUse" x="0" y="0" width="1640" height="1030"><feGaussianBlur stdDeviation="14"/></filter>
<filter id="t2g" filterUnits="userSpaceOnUse" x="0" y="0" width="1640" height="1030"><feGaussianBlur stdDeviation="40"/></filter>
<filter id="t2h" filterUnits="userSpaceOnUse" x="0" y="0" width="1640" height="1030"><feGaussianBlur stdDeviation="4"/></filter>
</defs>
<rect x="40" y="40" width="1556" height="952" fill="url(#t2a)"/>
<ellipse cx="800" cy="160" rx="330" ry="200" fill="#3a1ad0" filter="url(#t2g)"/>
<ellipse cx="1020" cy="800" rx="320" ry="170" fill="#9a10ac" filter="url(#t2g)"/>
<path d="M480 150 C600 300 700 440 760 560 C800 640 840 720 920 800 L1120 800 C1000 600 860 360 700 150Z" fill="url(#t2c)" filter="url(#t2f)" opacity=".9"/>
<!-- left layers -->
<path d="M40 70 L330 70 C400 130 440 170 500 210 C560 260 600 290 640 350 C700 450 760 560 800 640 C840 720 900 780 960 830 C1010 870 1070 910 1130 992 L40 992Z" fill="#5a1482" filter="url(#t2h)"/>
<path d="M330 70 C400 130 440 170 500 210 C560 260 600 290 640 350 L600 350 C540 290 470 250 420 200 C380 160 340 110 300 70Z" fill="#8a1c62" opacity=".85" filter="url(#t2h)"/>
<path d="M40 200 C200 260 330 300 450 380 C560 450 640 520 700 600 C760 690 840 800 940 860 C990 900 1040 940 1080 992 L40 992Z" fill="#45107a" filter="url(#t2h)"/>
<path d="M40 420 C200 450 360 500 470 580 C560 640 620 700 700 780 C760 830 830 870 920 900 C960 925 1000 955 1030 992 L40 992Z" fill="#330c6a" filter="url(#t2h)"/>
<path d="M40 620 C180 640 320 700 430 770 C520 830 600 880 700 920 L760 992 L40 992Z" fill="#260a5a" filter="url(#t2h)"/>
<path d="M40 800 C150 820 260 860 360 910 C420 940 480 970 520 992 L40 992Z" fill="#1c084c" filter="url(#t2h)"/>
<rect x="40" y="40" width="1556" height="952" fill="url(#t2b)"/>
<!-- menubar -->
<rect x="40" y="40" width="1556" height="24" fill="#3a22b0" fill-opacity=".7"/>
<g fill="#d8d0f0" font-size="13.500" font-weight="700"><text x="98" y="57">Finder</text><g font-weight="400" fill-opacity=".8"><text x="165" y="57">File</text><text x="210" y="57">Edit</text><text x="258" y="57">View</text><text x="313" y="57">Go</text><text x="354" y="57">Window</text><text x="427" y="57">Help</text><text x="1440" y="57">Mon Oct 4</text></g></g>
<circle cx="69" cy="52" r="6" fill="#e8e0f8"/><rect x="1288" y="47" width="22" height="10" rx="3" fill="#d8d0f0"/><path d="M1335 50a12 12 0 0 1 16 0l-8 9z" fill="#d8d0f0" fill-opacity=".8"/><circle cx="1380" cy="52" r="4.500" fill="none" stroke="#d8d0f0" stroke-width="2"/><rect x="1406" y="46" width="13" height="12" rx="3" fill="#d8d0f0" fill-opacity=".85"/>
<!-- dock -->
<rect x="104" y="908" width="1428" height="70" rx="16" fill="#2a1260" fill-opacity=".75" stroke="#fff" stroke-opacity=".12" stroke-width="1.500"/>
<rect x="112" y="915" width="55" height="55" rx="12.7" fill="#e6ecf4"/><path d="M124.7 915h17.6v55h-17.6a12.7 12.7 0 0 1 -12.7 -12.7v-29.7a12.7 12.7 0 0 1 12.7 -12.7z" fill="#2a9ef5"/><rect x="181.8" y="915" width="55" height="55" rx="12.7" fill="#d9d3de"/><rect x="191.2" y="924.4" width="9.4" height="9.4" rx="2.2" fill="#4cd964"/><rect x="204.9" y="924.4" width="9.4" height="9.4" rx="2.2" fill="#ffb400"/><rect x="218.7" y="924.4" width="9.4" height="9.4" rx="2.2" fill="#ff7a1a"/><rect x="191.2" y="938.1" width="9.4" height="9.4" rx="2.2" fill="#ff3b30"/><rect x="204.9" y="938.1" width="9.4" height="9.4" rx="2.2" fill="#9a9aa0"/><rect x="218.7" y="938.1" width="9.4" height="9.4" rx="2.2" fill="#ff2d78"/><rect x="191.2" y="951.9" width="9.4" height="9.4" rx="2.2" fill="#b150e0"/><rect x="204.9" y="951.9" width="9.4" height="9.4" rx="2.2" fill="#2a9ef5"/><rect x="218.7" y="951.9" width="9.4" height="9.4" rx="2.2" fill="#30d0b0"/><rect x="251.6" y="915" width="55" height="55" rx="12.7" fill="#f2f2f6"/><circle cx="279.1" cy="942.5" r="22" fill="#2b8cf0"/><path d="M265.4 956.2L275.8 939.2L282.4 945.8z" fill="#fff"/><path d="M292.9 928.8L275.8 939.2L282.4 945.8z" fill="#ff4040"/><rect x="321.4" y="915" width="55" height="55" rx="12.7" fill="#36d45a"/><ellipse cx="348.9" cy="940.9" rx="18.2" ry="14.9" fill="#eefaee"/><rect x="391.2" y="915" width="55" height="55" rx="12.7" fill="#2590f2"/><rect x="400" y="930.4" width="37.4" height="24.2" rx="2.8" fill="#eef2f6"/><path d="M401.1 931.5L418.7 945.8L436.3 931.5" fill="none" stroke="#9aa6b4" stroke-width="2.2"/><rect x="461" y="915" width="55" height="55" rx="12.7" fill="#7ad088"/><path d="M494 917.8h16.5v27.5h-16.5z" fill="#f0efe8"/><path d="M477.5 915h8.8v27.5h-8.8z" fill="#3c8cf0"/><circle cx="483" cy="949.1" r="11" fill="#2a84f0" stroke="#fff" stroke-width="2.8"/><rect x="530.8" y="915" width="55" height="55" rx="12.7" fill="#f7f5f7"/><ellipse cx="558.3" cy="932" rx="10.4" ry="6" fill="#ff9a30" fill-opacity=".85" transform="rotate(-90 558.3 932)"/><ellipse cx="565.7" cy="935.1" rx="10.4" ry="6" fill="#ffd030" fill-opacity=".85" transform="rotate(-45 565.7 935.1)"/><ellipse cx="568.8" cy="942.5" rx="10.4" ry="6" fill="#9bd84a" fill-opacity=".85" transform="rotate(0 568.8 942.5)"/><ellipse cx="565.7" cy="949.9" rx="10.4" ry="6" fill="#40c8a0" fill-opacity=".85" transform="rotate(45 565.7 949.9)"/><ellipse cx="558.3" cy="953" rx="10.4" ry="6" fill="#48a0f0" fill-opacity=".85" transform="rotate(90 558.3 953)"/><ellipse cx="550.9" cy="949.9" rx="10.4" ry="6" fill="#8a70e0" fill-opacity=".85" transform="rotate(135 550.9 949.9)"/><ellipse cx="547.9" cy="942.5" rx="10.4" ry="6" fill="#e060a8" fill-opacity=".85" transform="rotate(180 547.9 942.5)"/><ellipse cx="550.9" cy="935.1" rx="10.4" ry="6" fill="#f46048" fill-opacity=".85" transform="rotate(225 550.9 935.1)"/><rect x="600.6" y="915" width="55" height="55" rx="12.7" fill="#34cf56"/><rect x="608.9" y="932.6" width="24.8" height="19.8" rx="4.4" fill="#e8f6ea"/><path d="M635.8 942.5L647.4 933.7V951.3z" fill="#e8f6ea"/><rect x="670.4" y="915" width="55" height="55" rx="12.7" fill="#f8f6f8"/><path d="M670.4 927.6a12.7 12.7 0 0 1 12.7 -12.7h29.7a12.7 12.7 0 0 1 12.7 12.7v3.3h-55z" fill="#f2473f"/><rect x="692.4" y="939.8" width="11" height="19.2" fill="#3a3a3c"/><rect x="740.2" y="915" width="55" height="55" rx="12.7" fill="#b98a52"/><circle cx="767.7" cy="942.5" r="14.9" fill="none" stroke="#a37640" stroke-width="2.8"/><rect x="810" y="915" width="55" height="55" rx="12.7" fill="#f8f6f9"/><circle cx="821" cy="929.9" r="3.9" fill="#2a84f0"/><path d="M829.8 929.9h28.6" stroke="#c8c6cc" stroke-width="1.9"/><circle cx="821" cy="942.8" r="3.9" fill="#f0483e"/><path d="M829.8 942.8h28.6" stroke="#c8c6cc" stroke-width="1.9"/><circle cx="821" cy="955.7" r="3.9" fill="#f59a23"/><path d="M829.8 955.7h28.6" stroke="#c8c6cc" stroke-width="1.9"/><rect x="879.8" y="915" width="55" height="55" rx="12.7" fill="#f6f2ea"/><path d="M879.8 927.6a12.7 12.7 0 0 1 12.7 -12.7h29.7a12.7 12.7 0 0 1 12.7 12.7v2.2h-55z" fill="#fccf2f"/><rect x="949.6" y="915" width="55" height="55" rx="12.7" fill="#151517"/><rect x="960.6" y="937" width="33" height="12.1" fill="#e8e8ea"/><rect x="1019.4" y="915" width="55" height="55" rx="12.7" fill="#f5405a"/><path d="M1041.4 953.5V931.5L1059 927.1V949.1" fill="none" stroke="#fff" stroke-width="3.9"/><circle cx="1037.5" cy="953.5" r="5" fill="#fff"/><circle cx="1055.1" cy="949.6" r="5" fill="#fff"/><rect x="1089.2" y="915" width="55" height="55" rx="12.7" fill="#9a45da"/><circle cx="1116.7" cy="939.2" r="14.9" fill="none" stroke="#fff" stroke-width="3.3"/><circle cx="1116.7" cy="938.1" r="5" fill="#fff"/><rect x="1113.4" y="944.7" width="6.6" height="16.5" rx="3.3" fill="#fff"/><rect x="1159" y="915" width="55" height="55" rx="12.7" fill="#f8f6f8"/><path d="M1170 926h12.1L1203 959h-12.1z" fill="#f23b52"/><rect x="1228.8" y="915" width="55" height="55" rx="12.7" fill="#1b8ff5"/><path d="M1254.6 927.1L1268.4 955.7M1259 927.1L1244.2 955.7M1238.7 948h35.2" stroke="#fff" stroke-width="4.1" fill="none" stroke-linecap="round"/><rect x="1298.6" y="915" width="55" height="55" rx="12.7" fill="#8c8c90"/><circle cx="1326.1" cy="942.5" r="19.8" fill="#4a4a4e" stroke="#c8c8cc" stroke-width="2.8"/><circle cx="1326.1" cy="942.5" r="6.6" fill="#8c8c90"/><path d="M1381 915v55" stroke="#fff" stroke-opacity=".35" stroke-width="1.6"/><path d="M1398.5 921.6h16.5l4.4 5.5h29.7v33h-50.6z" fill="#4fb4f2"/><rect x="1398.5" y="929.3" width="50.6" height="33" rx="3.3" fill="#6cc6f8"/><path d="M1476 919.4h35.2l-4.4 46.2h-26.4z" fill="#77757d" fill-opacity=".95"/>
<!-- selection border -->
<rect x="44.650" y="44.650" width="1544.800" height="941.200" fill="none" stroke="#2748d6" stroke-width="8"/>
</svg>
</div>
<div class="thumb" style="left:838.700px;top:100px;width:378.800px;height:234px;">
<svg width="378.800" height="234" viewBox="43.500 40.650 1539.800 951" preserveAspectRatio="none">
<defs>
<linearGradient id="t3a" x1="0" y1="0" x2="1" y2="0"><stop offset="0" stop-color="#c436c0"/><stop offset=".2" stop-color="#e05ac0"/><stop offset=".45" stop-color="#8a3ad8"/><stop offset=".7" stop-color="#c44cb8"/><stop offset="1" stop-color="#7a2cb0"/></linearGradient>
<linearGradient id="t3b" x1="0" y1="0" x2="0" y2="1"><stop offset="0" stop-color="#150c2c"/><stop offset=".3" stop-color="#101a58"/><stop offset=".55" stop-color="#1552b8"/><stop offset="1" stop-color="#0a5cb8"/></linearGradient>
<linearGradient id="t3p" gradientUnits="userSpaceOnUse" x1="1290" y1="120" x2="1586" y2="260"><stop offset="0" stop-color="#a82492"/><stop offset=".4" stop-color="#dc4690"/><stop offset=".75" stop-color="#f4748e"/><stop offset="1" stop-color="#f8a090"/></linearGradient>
<linearGradient id="t3c" x1="0" y1="0" x2="0" y2="1"><stop offset="0" stop-color="#f0e8f4"/><stop offset="1" stop-color="#ead8ee"/></linearGradient>
<linearGradient id="t3d" x1="0" y1="0" x2="1" y2="0"><stop offset="0" stop-color="#6a7a78"/><stop offset=".45" stop-color="#8a9894"/><stop offset=".6" stop-color="#f4f4f4"/></linearGradient>
<filter id="t3f" filterUnits="userSpaceOnUse" x="0" y="0" width="1640" height="1030"><feGaussianBlur stdDeviation="3"/></filter>
<clipPath id="t3art"><rect x="628" y="337" width="287" height="290" rx="6"/></clipPath>
</defs>
<rect x="40" y="40" width="1546" height="954" fill="url(#t3b)"/>
<rect x="40" y="62" width="1546" height="60" fill="url(#t3a)"/>
<!-- left arcs -->
<g filter="url(#t3f)"><path d="M40 300 C80 420 100 520 130 640 L40 640Z" fill="#0c0a24"/><path d="M40 330 C70 430 95 540 120 640" fill="none" stroke="#f04018" stroke-width="30"/><path d="M40 390 C60 470 80 560 100 650" fill="none" stroke="#f88a18" stroke-width="14"/><path d="M40 450 C55 520 70 590 85 660" fill="none" stroke="#c8d8f8" stroke-width="6"/>
<path d="M100 780 C180 860 260 900 360 905 L360 930 C240 925 140 880 60 800Z" fill="#c030c0"/><path d="M110 800 C200 880 300 915 420 915" fill="none" stroke="#6a20b0" stroke-width="14"/><path d="M40 880 C100 900 200 915 360 912 L360 994 L40 994Z" fill="#0a1a5c"/>
<!-- right arcs -->
<path d="M1228 62 L1586 62 L1586 300 L1468 420 L1468 240 L1228 240Z" fill="url(#t3p)"/>
<path d="M1228 62 L1380 62 C1370 110 1330 160 1270 175 L1228 160Z" fill="#12b4d8"/><path d="M1228 150 C1260 160 1280 150 1290 140 L1300 240 L1228 240Z" fill="#14104a"/>
<path d="M1380 62 C1372 120 1340 170 1290 200" fill="none" stroke="#2a1460" stroke-width="12"/><path d="M1410 62 C1400 130 1360 200 1300 240" fill="none" stroke="#7a1c78" stroke-width="10"/>
<path d="M1586 262 L1468 372 L1468 400 L1586 292Z" fill="#f8f0f0"/><path d="M1586 296 L1468 404 L1468 430 L1586 322Z" fill="#f89a28"/><path d="M1586 322 L1468 430 L1468 448 L1586 340Z" fill="#1a1850"/>
<path d="M1586 340 L1468 448 L1468 900 L1586 900Z" fill="#0c4c9e"/>
</g>
<!-- menubar -->
<rect x="40" y="40" width="1546" height="23" fill="#4a2080" fill-opacity=".85"/>
<g font-size="13" fill="#f0e8f8"><circle cx="68" cy="51" r="5.500"/><text x="97" y="56" font-weight="700">Podcasts</text><g fill-opacity=".85"><text x="182" y="56">File</text><text x="227" y="56">Edit</text><text x="275" y="56">View</text><text x="329" y="56">Controls</text><text x="405" y="56">Account</text><text x="481" y="56">Window</text><text x="554" y="56">Help</text><text x="1433" y="56">Mon Oct 4&#160; 9:41 AM</text></g><path d="M1248 56l10-10-3 11z"/><rect x="1283" y="46" width="24" height="10" rx="3"/><path d="M1327 48a13 13 0 0 1 18 0l-9 10z"/><circle cx="1374" cy="51" r="4.500" fill="none" stroke="#f0e8f8" stroke-width="2"/><rect x="1399" y="45" width="13" height="12" rx="3"/></g>
<!-- Music window -->
<rect x="110" y="85" width="1118" height="696" rx="10" fill="#fff"/>
<path d="M120 85h228v696H120a10 10 0 0 1-10-10V95a10 10 0 0 1 10-10z" fill="#e9e6ec"/>
<g fill="#d0ccd4"><circle cx="135" cy="113" r="4.500"/><circle cx="157" cy="113" r="4.500"/><circle cx="179" cy="113" r="4.500"/></g>
<rect x="125" y="154" width="208" height="25" rx="6" fill="#dedbe2"/><rect x="125" y="250" width="208" height="26" rx="6" fill="#d6d3da"/>
<g font-size="12.500" fill="#b4b0ba"><text x="150" y="172">Search</text><text x="130" y="211" font-size="10">Apple Music</text><text x="164" y="237">Listen Now</text><text x="164" y="268" fill="#98949e">Browse</text><text x="130" y="305" font-size="10">Library</text><text x="164" y="332">Recently Added</text><text x="164" y="361">Artists</text><text x="164" y="392">Albums</text><text x="164" y="422">Songs</text><text x="130" y="458" font-size="10">Store</text><text x="164" y="485">iTunes Store</text><text x="130" y="523" font-size="10">Playlists</text><text x="164" y="551">All Playlists</text></g>
<g fill="#b8b4be"><path d="M460 103v18l16-9z" fill="#8a868e"/><path d="M418 105v14l-12-7zM430 105v14l-12-7zM492 105v14l12-7zM504 105v14l12-7z"/><rect x="594" y="92" width="38" height="38" rx="4" fill="#e4e2e8"/><circle cx="790" cy="112" r="9" fill="#6a666e"/><rect x="975" y="111" width="100" height="3" rx="1.500"/><circle cx="1125" cy="112" r="8"/><circle cx="1160" cy="112" r="7"/></g>
<text x="390" y="210" font-size="36" font-weight="700" fill="#1d1d1f" letter-spacing="-.5">Browse</text>
<!-- Podcasts window -->
<rect x="347" y="236" width="1124" height="660" rx="11" fill="#000" fill-opacity=".18" filter="url(#t3f)"/>
<rect x="350" y="238" width="1118" height="655" rx="10" fill="#fff"/>
<path d="M360 238h226v655H360a10 10 0 0 1-10-10V248a10 10 0 0 1 10-10z" fill="url(#t3c)"/>
<circle cx="377" cy="267" r="5.500" fill="#f4574e"/><circle cx="399" cy="267" r="5.500" fill="#f8bc2e"/><circle cx="421" cy="267" r="5.500" fill="#2cc640"/>
<rect x="364" y="302" width="212" height="25" rx="6" fill="#e2dbe6"/><rect x="364" y="428" width="212" height="27" rx="6" fill="#d9d2de"/>
<g font-size="12.500" fill="#4a464e"><text x="390" y="320" fill="#b0aab6">Search</text><text x="367" y="356" font-size="9.500" fill="#b0aab6">Apple Podcasts</text><text x="396" y="386">Listen Now</text><text x="396" y="416">Browse</text><text x="396" y="446">Top Charts</text><text x="367" y="478" font-size="9.500" fill="#b0aab6">Library</text><text x="396" y="508">Shows</text><text x="396" y="538">Saved</text><text x="396" y="568">Downloaded</text><text x="396" y="599">Latest Episodes</text></g>
<g fill="#9a6ad8"><circle cx="378" cy="381" r="5.500"/><rect x="373" y="406" width="10" height="10" rx="2"/><rect x="373" y="436" width="10" height="10" rx="2" fill="#a8a0b0"/><circle cx="378" cy="503" r="5" fill="none" stroke="#8a8490" stroke-width="1.500"/><rect x="374" y="528" width="8" height="11" fill="none" stroke="#8a8490" stroke-width="1.500"/><circle cx="378" cy="563" r="5" fill="none" stroke="#9a6ad8" stroke-width="1.500"/><circle cx="378" cy="594" r="5" fill="none" stroke="#8a8490" stroke-width="1.500"/></g>
<g fill="#b8b4be"><circle cx="668" cy="267" r="8" fill="none" stroke="#c8c4cc" stroke-width="2"/><path d="M698 257v20l17-10z" fill="#2a282c"/><circle cx="742" cy="267" r="8" fill="none" stroke="#c8c4cc" stroke-width="2"/><rect x="829" y="247" width="42" height="42" rx="5" fill="#e6e4ea"/><circle cx="850" cy="266" r="10" fill="none" stroke="#c4c0c8" stroke-width="2.500"/><circle cx="1025" cy="266" r="9.500" fill="#77737b"/><rect x="1212" y="265" width="100" height="3" rx="1.500"/><circle cx="1366" cy="267" r="8" fill="#8a868e"/><circle cx="1402" cy="267" r="8" fill="none" stroke="#8a868e" stroke-width="2"/><rect x="1430" y="261" width="14" height="2.500"/><rect x="1430" y="266" width="14" height="2.500"/><rect x="1430" y="271" width="14" height="2.500"/></g>
<path d="M616 309l-6 6 6 6" fill="none" stroke="#8a868e" stroke-width="2"/>
<!-- artwork -->
<rect x="625" y="336" width="294" height="296" rx="8" fill="#000" fill-opacity=".12" filter="url(#t3f)"/>
<g clip-path="url(#t3art)"><rect x="628" y="337" width="287" height="290" fill="#f4f4f5"/><path d="M628 337h110c30 40 40 80 35 130c30 30 20 70 20 160H628z" fill="#7d8f8c"/><path d="M628 490c40-20 90-10 120 20c30 40 45 80 45 117H628z" fill="#5a7a78"/><ellipse cx="672" cy="440" rx="46" ry="62" fill="#c9a48c"/><path d="M628 337h95c25 15 30 50 18 75c-20-40-60-50-113-20z" fill="#b8b8b8"/><path d="M635 480c15 25 50 30 75 10l-5 30c-20 12-50 10-66-10z" fill="#a8a4a0"/></g>
<g font-weight="700" font-size="22" fill="#5a30d8" text-anchor="end"><text x="813" y="444" textLength="42" lengthAdjust="spacingAndGlyphs">THE</text><text x="813" y="466" textLength="108" lengthAdjust="spacingAndGlyphs">PROBLEM</text><g fill="#1d1d1f"><text x="813" y="488" textLength="56" lengthAdjust="spacingAndGlyphs">WITH</text><text x="905" y="510" textLength="100" lengthAdjust="spacingAndGlyphs" font-size="23">JON</text><text x="905" y="532" textLength="108" lengthAdjust="spacingAndGlyphs" font-size="23">STEWART</text></g><text x="905" y="548" font-size="9" font-weight="400">The Official Podcast</text></g>
<rect x="866" y="352" width="38" height="11" rx="2" fill="#1d1d1f"/>
<text x="962" y="409" font-size="26.500" font-weight="700" fill="#1d1d1f" textLength="392" lengthAdjust="spacingAndGlyphs">The Problem With Jon Stewart</text>
<text x="962" y="443" font-size="26.500" fill="#6a3ce0" textLength="124" lengthAdjust="spacingAndGlyphs">Apple TV+</text>
<g fill="#8a868e" font-size="9"><text x="962" y="467">★ 4.8 (5K) · TV &amp; FILM · UPDATED WEEKLY · ▣</text></g>
<g font-size="14" fill="#2a282c"><text x="962" y="506" textLength="462" lengthAdjust="spacingAndGlyphs">The issues we tackle on The Problem With Jon Stewart are Too</text><text x="962" y="528" textLength="428" lengthAdjust="spacingAndGlyphs">Big for TV™—so they spill over into the brilliantly titled The</text><text x="962" y="550" textLength="376" lengthAdjust="spacingAndGlyphs">Problem With Jon Stewart podcast. Jon is joined by</text><text x="1342" y="550" fill="#b8b4be">the…</text><text x="1388" y="550" font-size="10" font-weight="700">MORE</text></g>
<rect x="961" y="596" width="159" height="31" rx="5" fill="#5a2ed8"/><path d="M983 605v13l11-6.500z" fill="#fff"/><text x="1001" y="617" font-size="13.500" font-weight="700" fill="#fff">Latest Episode</text>
<text x="1312" y="617" font-size="12.500" font-weight="700" fill="#6a3ce0">+Follow</text><g fill="#6a3ce0"><circle cx="1400" cy="612" r="2"/><circle cx="1408" cy="612" r="2"/><circle cx="1416" cy="612" r="2"/></g>
<text x="628" y="713" font-size="18.500" font-weight="700" fill="#1d1d1f">Episodes</text>
<g font-size="9.500" fill="#8a868e"><text x="628" y="761">TRAILER</text><text x="628" y="866">WEDNESDAY · ▣</text><text x="1190" y="786">75 sec</text></g>
<g font-size="14" font-weight="700" fill="#1d1d1f"><text x="628" y="782">The Problem With Teasers</text><text x="628" y="889">The Problem With War: Garbage Fire (Literally!)</text></g>
<g font-size="11" fill="#a09ca4"><text x="628" y="802" textLength="476" lengthAdjust="spacingAndGlyphs">The Problem With Jon Stewart podcast launches September 30. Follow now to</text><text x="628" y="818" textLength="448" lengthAdjust="spacingAndGlyphs">get the first episode as soon as it's released. In the meantime, here's this…</text></g>
<!-- dock -->
<rect x="100" y="915" width="1426" height="77" rx="17" fill="#b4c8ec" fill-opacity=".72" stroke="#fff" stroke-opacity=".3" stroke-width="1.500"/>
<rect x="108" y="925" width="56" height="56" rx="12.9" fill="#e6ecf4"/><path d="M120.9 925h17.9v56h-17.9a12.9 12.9 0 0 1 -12.9 -12.9v-30.2a12.9 12.9 0 0 1 12.9 -12.9z" fill="#2a9ef5"/><rect x="177.4" y="925" width="56" height="56" rx="12.9" fill="#d9d3de"/><rect x="186.9" y="934.5" width="9.5" height="9.5" rx="2.2" fill="#4cd964"/><rect x="200.9" y="934.5" width="9.5" height="9.5" rx="2.2" fill="#ffb400"/><rect x="214.9" y="934.5" width="9.5" height="9.5" rx="2.2" fill="#ff7a1a"/><rect x="186.9" y="948.5" width="9.5" height="9.5" rx="2.2" fill="#ff3b30"/><rect x="200.9" y="948.5" width="9.5" height="9.5" rx="2.2" fill="#9a9aa0"/><rect x="214.9" y="948.5" width="9.5" height="9.5" rx="2.2" fill="#ff2d78"/><rect x="186.9" y="962.5" width="9.5" height="9.5" rx="2.2" fill="#b150e0"/><rect x="200.9" y="962.5" width="9.5" height="9.5" rx="2.2" fill="#2a9ef5"/><rect x="214.9" y="962.5" width="9.5" height="9.5" rx="2.2" fill="#30d0b0"/><rect x="246.8" y="925" width="56" height="56" rx="12.9" fill="#f2f2f6"/><circle cx="274.8" cy="953" r="22.4" fill="#2b8cf0"/><path d="M260.8 967L271.4 949.6L278.2 956.4z" fill="#fff"/><path d="M288.8 939L271.4 949.6L278.2 956.4z" fill="#ff4040"/><rect x="316.2" y="925" width="56" height="56" rx="12.9" fill="#36d45a"/><ellipse cx="344.2" cy="951.3" rx="18.5" ry="15.1" fill="#eefaee"/><rect x="385.6" y="925" width="56" height="56" rx="12.9" fill="#2590f2"/><rect x="394.6" y="940.7" width="38.1" height="24.6" rx="2.8" fill="#eef2f6"/><path d="M395.7 941.8L413.6 956.4L431.5 941.8" fill="none" stroke="#9aa6b4" stroke-width="2.2"/><rect x="455" y="925" width="56" height="56" rx="12.9" fill="#7ad088"/><path d="M488.6 927.8h16.8v28h-16.8z" fill="#f0efe8"/><path d="M471.8 925h9v28h-9z" fill="#3c8cf0"/><circle cx="477.4" cy="959.7" r="11.2" fill="#2a84f0" stroke="#fff" stroke-width="2.8"/><rect x="524.4" y="925" width="56" height="56" rx="12.9" fill="#f7f5f7"/><ellipse cx="552.4" cy="942.4" rx="10.6" ry="6.2" fill="#ff9a30" fill-opacity=".85" transform="rotate(-90 552.4 942.4)"/><ellipse cx="559.9" cy="945.5" rx="10.6" ry="6.2" fill="#ffd030" fill-opacity=".85" transform="rotate(-45 559.9 945.5)"/><ellipse cx="563" cy="953" rx="10.6" ry="6.2" fill="#9bd84a" fill-opacity=".85" transform="rotate(0 563 953)"/><ellipse cx="559.9" cy="960.5" rx="10.6" ry="6.2" fill="#40c8a0" fill-opacity=".85" transform="rotate(45 559.9 960.5)"/><ellipse cx="552.4" cy="963.6" rx="10.6" ry="6.2" fill="#48a0f0" fill-opacity=".85" transform="rotate(90 552.4 963.6)"/><ellipse cx="544.9" cy="960.5" rx="10.6" ry="6.2" fill="#8a70e0" fill-opacity=".85" transform="rotate(135 544.9 960.5)"/><ellipse cx="541.8" cy="953" rx="10.6" ry="6.2" fill="#e060a8" fill-opacity=".85" transform="rotate(180 541.8 953)"/><ellipse cx="544.9" cy="945.5" rx="10.6" ry="6.2" fill="#f46048" fill-opacity=".85" transform="rotate(225 544.9 945.5)"/><rect x="593.8" y="925" width="56" height="56" rx="12.9" fill="#34cf56"/><rect x="602.2" y="942.9" width="25.2" height="20.2" rx="4.5" fill="#e8f6ea"/><path d="M629.6 953L641.4 944V962z" fill="#e8f6ea"/><rect x="663.2" y="925" width="56" height="56" rx="12.9" fill="#f8f6f8"/><path d="M663.2 937.9a12.9 12.9 0 0 1 12.9 -12.9h30.2a12.9 12.9 0 0 1 12.9 12.9v3.4h-56z" fill="#f2473f"/><rect x="685.6" y="950.2" width="11.2" height="19.6" fill="#3a3a3c"/><rect x="732.6" y="925" width="56" height="56" rx="12.9" fill="#b98a52"/><circle cx="760.6" cy="953" r="15.1" fill="none" stroke="#a37640" stroke-width="2.8"/><rect x="802" y="925" width="56" height="56" rx="12.9" fill="#f8f6f9"/><circle cx="813.2" cy="940.1" r="3.9" fill="#2a84f0"/><path d="M822.2 940.1h29.1" stroke="#c8c6cc" stroke-width="2"/><circle cx="813.2" cy="953.3" r="3.9" fill="#f0483e"/><path d="M822.2 953.3h29.1" stroke="#c8c6cc" stroke-width="2"/><circle cx="813.2" cy="966.4" r="3.9" fill="#f59a23"/><path d="M822.2 966.4h29.1" stroke="#c8c6cc" stroke-width="2"/><rect x="871.4" y="925" width="56" height="56" rx="12.9" fill="#f6f2ea"/><path d="M871.4 937.9a12.9 12.9 0 0 1 12.9 -12.9h30.2a12.9 12.9 0 0 1 12.9 12.9v2.2h-56z" fill="#fccf2f"/><rect x="940.8" y="925" width="56" height="56" rx="12.9" fill="#151517"/><rect x="952" y="947.4" width="33.6" height="12.3" fill="#e8e8ea"/><rect x="1010.2" y="925" width="56" height="56" rx="12.9" fill="#f5405a"/><path d="M1032.6 964.2V941.8L1050.5 937.3V959.7" fill="none" stroke="#fff" stroke-width="3.9"/><circle cx="1028.7" cy="964.2" r="5" fill="#fff"/><circle cx="1046.6" cy="960.3" r="5" fill="#fff"/><rect x="1079.6" y="925" width="56" height="56" rx="12.9" fill="#9a45da"/><circle cx="1107.6" cy="949.6" r="15.1" fill="none" stroke="#fff" stroke-width="3.4"/><circle cx="1107.6" cy="948.5" r="5" fill="#fff"/><rect x="1104.2" y="955.2" width="6.7" height="16.8" rx="3.4" fill="#fff"/><rect x="1149" y="925" width="56" height="56" rx="12.9" fill="#f8f6f8"/><path d="M1160.2 936.2h12.3L1193.8 969.8h-12.3z" fill="#f23b52"/><rect x="1218.4" y="925" width="56" height="56" rx="12.9" fill="#1b8ff5"/><path d="M1244.7 937.3L1258.7 966.4M1249.2 937.3L1234.1 966.4M1228.5 958.6h35.8" stroke="#fff" stroke-width="4.2" fill="none" stroke-linecap="round"/><rect x="1287.8" y="925" width="56" height="56" rx="12.9" fill="#8c8c90"/><circle cx="1315.8" cy="953" r="20.2" fill="#4a4a4e" stroke="#c8c8cc" stroke-width="2.8"/><circle cx="1315.8" cy="953" r="6.7" fill="#8c8c90"/><path d="M1369.7 925v56" stroke="#fff" stroke-opacity=".35" stroke-width="1.7"/><path d="M1387.2 931.7h16.8l4.5 5.6h30.2v33.6h-51.5z" fill="#4fb4f2"/><rect x="1387.2" y="939.6" width="51.5" height="33.6" rx="3.4" fill="#6cc6f8"/><path d="M1464.4 929.5h35.8l-4.5 47h-26.9z" fill="#e4e2e8" fill-opacity=".9"/>
</svg>
</div>
<div class="thumb" style="left:30px;top:458.500px;width:378.300px;height:233.500px;">
<svg width="378.300" height="233.500" viewBox="40.650 42.700 1537.800 949.200" preserveAspectRatio="none">
<defs>
<linearGradient id="t4a" x1="0" y1="0" x2="0" y2="1"><stop offset="0" stop-color="#2a4cc4"/><stop offset=".3" stop-color="#3a5cd6"/><stop offset=".62" stop-color="#5672e2"/><stop offset=".82" stop-color="#9a9cec"/><stop offset=".93" stop-color="#d4c4e6"/><stop offset="1" stop-color="#f4dcb0"/></linearGradient>
<linearGradient id="t4h" x1="0" y1="0" x2="1" y2="0"><stop offset="0" stop-color="#746a88"/><stop offset=".3" stop-color="#857a98"/><stop offset=".5" stop-color="#6a6680"/><stop offset=".75" stop-color="#9a98b4"/><stop offset="1" stop-color="#8486a4"/></linearGradient>
<linearGradient id="t4v" x1="0" y1="0" x2="0" y2="1"><stop offset="0" stop-color="#1e2036" stop-opacity=".85"/><stop offset=".18" stop-color="#242640" stop-opacity=".55"/><stop offset=".38" stop-color="#2a2838" stop-opacity=".05"/><stop offset=".6" stop-color="#1c1c2c" stop-opacity=".05"/><stop offset=".7" stop-color="#1e2238" stop-opacity=".8"/><stop offset=".76" stop-color="#1f2238" stop-opacity=".97"/><stop offset="1" stop-color="#1c1f34"/></linearGradient>
<radialGradient id="t4g" cx=".5" cy=".5" r=".5"><stop offset="0" stop-color="#fff4e6" stop-opacity=".95"/><stop offset=".4" stop-color="#f0d8d0" stop-opacity=".5"/><stop offset="1" stop-color="#e0c0d0" stop-opacity="0"/></radialGradient>
<filter id="t4f" filterUnits="userSpaceOnUse" x="0" y="0" width="1640" height="1030"><feGaussianBlur stdDeviation="6"/></filter>
<filter id="t4f3" filterUnits="userSpaceOnUse" x="0" y="0" width="1640" height="1030"><feGaussianBlur stdDeviation="16"/></filter>
<filter id="t4f2" filterUnits="userSpaceOnUse" x="0" y="0" width="1640" height="1030"><feGaussianBlur stdDeviation="2"/></filter>
<clipPath id="t4c"><path d="M483 178h1052v570a10 10 0 0 1-10 10H493a10 10 0 0 1-10-10z"/></clipPath>
</defs>
<rect x="40" y="42" width="1540" height="952" fill="url(#t4a)"/>
<!-- menubar -->
<rect x="40" y="42" width="1540" height="21" fill="#2846b4" fill-opacity=".9"/>
<g font-size="13" fill="#e8ecfc"><circle cx="63" cy="52" r="5.500"/><text x="93" y="57" font-weight="700">TV</text><g fill-opacity=".88"><text x="134" y="57">File</text><text x="178" y="57">Edit</text><text x="224" y="57">Video</text><text x="285" y="57">View</text><text x="337" y="57">Controls</text><text x="415" y="57">Account</text><text x="490" y="57">Window</text><text x="564" y="57">Help</text><text x="1430" y="57">Mon Oct 4&#160; 9:41 AM</text></g><path d="M1211 57l10-10-3 11z"/><circle cx="1251" cy="52" r="5" fill="none" stroke="#e8ecfc" stroke-width="1.500"/><rect x="1278" y="47" width="24" height="10" rx="3"/><path d="M1322 49a13 13 0 0 1 18 0l-9 10z"/><circle cx="1368" cy="52" r="4.500" fill="none" stroke="#e8ecfc" stroke-width="2"/><rect x="1396" y="46" width="13" height="12" rx="3"/></g>
<!-- App Store window -->
<rect x="78" y="270" width="1080" height="620" rx="11" fill="#0a1a60" fill-opacity=".25" filter="url(#t4f)"/>
<rect x="80" y="272" width="1075" height="615" rx="10" fill="#fff"/>
<path d="M90 272h226v615H90a10 10 0 0 1-10-10V282a10 10 0 0 1 10-10z" fill="#e9e9ee"/>
<g fill="#d2d2d8"><circle cx="104" cy="298" r="4.500"/><circle cx="124" cy="298" r="4.500"/><circle cx="144" cy="298" r="4.500"/></g>
<rect x="94" y="330" width="212" height="27" rx="6" fill="#dadae0"/><circle cx="106" cy="342" r="4.500" fill="none" stroke="#3a3a40" stroke-width="2"/><text x="124" y="348" font-size="12.500" fill="#2a2a30">Apple</text><circle cx="291" cy="343" r="6" fill="#6a6a72"/>
<g font-size="12.500" fill="#c0c0c8"><text x="126" y="402">Discover</text><text x="126" y="440">Arcade</text><text x="126" y="478">Create</text><text x="126" y="516">Work</text><text x="126" y="555">Play</text><text x="126" y="594">Develop</text><text x="126" y="633">Categories</text><text x="126" y="672">Updates</text><text x="136" y="862">Highrun</text></g>
<g fill="none" stroke="#ccccd4" stroke-width="1.500"><circle cx="106" cy="397" r="5"/><circle cx="106" cy="435" r="5"/><circle cx="106" cy="473" r="5"/><circle cx="106" cy="511" r="5"/><circle cx="106" cy="550" r="5"/><circle cx="106" cy="589" r="5"/><circle cx="106" cy="628" r="5"/><circle cx="106" cy="667" r="5"/><circle cx="110" cy="856" r="15" stroke-width="2.500"/></g>
<path d="M352 294l-6 6 6 6" fill="none" stroke="#c4c4cc" stroke-width="2"/>
<text x="362" y="371" font-size="36" font-weight="700" fill="#1d1d1f" letter-spacing="-.5">Apple</text>
<text x="362" y="423" font-size="20" font-weight="700" fill="#1d1d1f">Apps &amp; Gam</text>
<rect x="364" y="471" width="46" height="46" rx="11" fill="#1b8ff5"/><path d="M385 480l12 24M391 480l-12 24M375 498h26" stroke="#fff" stroke-width="3.500" stroke-linecap="round"/>
<rect x="364" y="566" width="46" height="46" rx="11" fill="#faf8f8" stroke="#e4e0e0" stroke-width="1"/><path d="M374 600c10 6 22 4 27-6c2-8-4-16-8-20c2 8-2 14-6 14c-6-4-12-10-14-12c4 8 10 14 14 18c-4 2-8 4-13 6z" fill="#f26a2a"/>
<rect x="364" y="662" width="46" height="46" rx="11" fill="#f28a1e"/><rect x="373" y="672" width="28" height="22" rx="3" fill="#fff4e4"/><path d="M380 688l8-10 6 8" stroke="#e05a1e" stroke-width="3" fill="none"/>
<rect x="364" y="757" width="46" height="46" rx="11" fill="#f6f8fb"/><circle cx="387" cy="780" r="18" fill="#2a8ee8"/><path d="M376 772c8-6 18-4 22 2c-6 2-8 8-4 12c-6 4-14 2-18-4z" fill="#9ad8f8"/>
<rect x="364" y="850" width="46" height="37" rx="11" fill="#2a2a2e"/><circle cx="387" cy="874" r="14" fill="none" stroke="#c8c8cc" stroke-width="3"/>
<g font-size="12.500" font-weight="700" fill="#2a2a2e"><text x="428" y="487">Apple D</text><text x="428" y="582">Swift Pl</text><text x="428" y="678">Classro</text><text x="428" y="775">macOS Server</text><text x="428" y="869">Logic Pro</text><text x="815" y="775">GarageBand</text><text x="815" y="869">MainStage</text></g>
<g font-size="9.500" fill="#b4b4bc"><text x="428" y="505">Develope</text><text x="428" y="600">Learn rea</text><text x="428" y="696">Your teac</text><text x="428" y="793">Utilities</text><text x="428" y="885">Professional music production</text><text x="815" y="793">A recording studio on your Mac</text></g>
<rect x="752" y="757" width="46" height="46" rx="11" fill="#2a2420"/><path d="M766 796c-6-14 2-24 8-30c6 4 14 16 10 30z" fill="#e8a040"/><rect x="752" y="850" width="46" height="37" rx="11" fill="#2a2420"/><path d="M762 887v-24h26v24z" fill="#f0b030"/>
<g font-size="10" font-weight="700" fill="#2a84f0"><rect x="655" y="769" width="60" height="19" rx="9.500" fill="#e9eefa"/><text x="666" y="783">$19.99</text><rect x="655" y="865" width="60" height="19" rx="9.500" fill="#e9eefa"/><text x="660" y="879">$199.99</text><rect x="1042" y="769" width="60" height="19" rx="9.500" fill="#e9eefa"/><text x="1062" y="783">GET</text><rect x="1042" y="865" width="60" height="19" rx="9.500" fill="#e9eefa"/><text x="1052" y="879">$29.99</text></g>
<!-- TV window -->
<rect x="480" y="78" width="1060" height="686" rx="12" fill="#081040" fill-opacity=".35" filter="url(#t4f)"/>
<rect x="483" y="80" width="1052" height="678" rx="10" fill="#f3f3f5"/>
<rect x="483" y="135" width="1052" height="44" fill="#fdfdfd"/>
<circle cx="511" cy="109" r="6" fill="#f4574e"/><circle cx="533" cy="109" r="6" fill="#f8bc2e"/><circle cx="555" cy="109" r="6" fill="#2cc640"/>
<rect x="822" y="93" width="94" height="33" rx="7" fill="#e2e2e6"/>
<g font-size="12.500" fill="#8a8a92"><text x="723" y="114">Watch Now</text><text x="852" y="114" font-weight="700" fill="#2a2a2e">tv+</text><text x="958" y="114">Movies</text><text x="1063" y="114">TV Shows</text><text x="1185" y="114">Library</text><text x="1362" y="114" fill="#c0c0c8">Search</text><text x="975" y="162" fill="#3a3a40">Foundation</text></g>
<circle cx="1343" cy="108" r="4.500" fill="none" stroke="#b0b0b8" stroke-width="1.500"/><path d="M516 151l-7 7 7 7" fill="none" stroke="#c0c0c8" stroke-width="2"/><circle cx="1503" cy="159" r="6" fill="none" stroke="#c8c8d0" stroke-width="1.500"/>
<g clip-path="url(#t4c)">
<rect x="483" y="178" width="1052" height="580" fill="url(#t4h)"/>
<g filter="url(#t4f)">
<ellipse cx="640" cy="420" rx="200" ry="170" fill="#a088a8" opacity=".55"/>
<path d="M500 178h34l118 340h-40z" fill="#f0c8b0" opacity=".5"/><path d="M632 178h26l120 320h-34z" fill="#f4d4b8" opacity=".55"/><path d="M560 178h16l110 330h-20z" fill="#b89ab8" opacity=".5"/>
<ellipse cx="1370" cy="440" rx="230" ry="95" fill="#e2e0ee" opacity=".8"/><ellipse cx="1250" cy="520" rx="300" ry="50" fill="#f0eaf0" opacity=".75"/>
<ellipse cx="870" cy="380" rx="90" ry="130" fill="#7c7490" opacity=".7"/>
</g>
<path d="M1280 340a120 60 -12 0 1 220-40" fill="none" stroke="#e8e8f4" stroke-width="2" opacity=".6"/>
<g filter="url(#t4f2)">
<path d="M900 300c10-70 60-118 130-118c70 0 118 50 126 104c6 20 18 60 26 90c2 8-10 10-18 12c2 12 2 22-4 30c-2 8 0 14-6 20c0 16-4 26-26 26c-16 0-30-4-42 2c-14 14-22 30-20 52c2 30 30 50 60 70c40 24 70 60 80 170H780c4-90 40-140 100-170c24-20 30-50 24-80c-30-40-50-110-4-208z" fill="#1b1a26"/>
<path d="M905 290c-30 70-24 150 6 210c8 30 2 60-26 80c-50 26-90 70-100 178h-110c10-110 50-170 120-200c-30-80-10-200 110-268z" fill="#4a4660" opacity=".8"/>
</g>
<g filter="url(#t4f3)"><ellipse cx="1100" cy="505" rx="70" ry="46" fill="#fff0e0" opacity=".95"/><ellipse cx="1060" cy="560" rx="70" ry="50" fill="#e8905a" opacity=".7"/><ellipse cx="1150" cy="500" rx="110" ry="30" fill="#fff" opacity=".7"/></g>
<g filter="url(#t4f2)"><ellipse cx="760" cy="420" rx="78" ry="13" fill="#3c3a50"/><ellipse cx="750" cy="413" rx="52" ry="8" fill="#6a6880"/>
<path d="M1350 548v-100l14-8 6 8v100zM1408 548v-108l12-8 10 8v108zM1384 548v-56l10-4v60z" fill="#4e4e68"/><path d="M1200 560c60-20 120-30 180-24c60-6 110 0 155 10v30h-335z" fill="#3a3c54"/><path d="M806 528l20-6 16 4 18-4v12h-54z" fill="#3a384c"/></g>
<rect x="483" y="178" width="1052" height="580" fill="url(#t4v)"/>
</g>
<text x="526" y="251" font-size="40" fill="#d4c8cc" fill-opacity=".85" textLength="308" lengthAdjust="spacing" font-family="Liberation Sans, sans-serif">FOUNDATION</text>
<text x="616" y="276" font-size="9" font-weight="700" fill="#e8e0e4">NEW EPISODE FRIDAYS</text>
<text x="1443" y="251" font-size="32" font-weight="700" fill="#fff" letter-spacing="-1">tv+</text><path d="M1436 232c-1 8 4 12 5 13c-2 5-5 9-9 9c-3 0-4-2-7-2s-4 2-7 2c-5 0-10-10-8-18c2-6 7-9 11-9c3 0 5 2 7 2s5-2 8-2c3 0 6 2 7 5zM1429 224c-3 0-4 1-5 2c0-4 3-7 6-8c1 3-0 5-1 6z" fill="#fff"/>
<text x="648" y="585" font-size="10" fill="#b8b4c4">Apple TV+</text>
<g fill="#fff"><rect x="527" y="603" width="307" height="37" rx="5"/><rect x="527" y="647" width="307" height="37" rx="5"/><rect x="527" y="690" width="307" height="37" rx="5"/></g>
<g font-size="13.500" font-weight="700" fill="#1d1d1f"><path d="M605 615v13l11-6.500z"/><text x="622" y="627">Play Free Episode</text><text x="628" y="670">Start Free Trial</text><text x="612" y="714">+&#160; Add to Up Next</text></g>
<g font-size="14" fill="#f0eef4"><text x="862" y="619" textLength="282" lengthAdjust="spacingAndGlyphs">Based on the award-winning novels by</text><text x="862" y="643" textLength="280" lengthAdjust="spacingAndGlyphs">Isaac Asimov, Foundation chronicles a</text><text x="862" y="666" textLength="256" lengthAdjust="spacingAndGlyphs">band of exiles on their monumental</text><text x="862" y="690" textLength="254" lengthAdjust="spacingAndGlyphs">journey to save humanity and reb…</text><text x="1126" y="690" font-size="11" fill="#4a8af4">more</text><text x="1187" y="619" textLength="264" lengthAdjust="spacingAndGlyphs"><tspan fill="#8a8a98">Starring</tspan> Jared Harris, Lee Pace, Lou</text><text x="1187" y="643">Llobell</text></g>
<g font-size="9.500" fill="#a8a8b8"><text x="862" y="723">Sci-Fi · Sep 24, 2021 · 1 hr 9 min</text><rect x="1098" y="713" width="34" height="11" rx="2" fill="none" stroke="#8a8a98"/><rect x="1143" y="713" width="22" height="11" rx="2" fill="#a8a8b8"/><rect x="1175" y="713" width="30" height="11" rx="2" fill="none" stroke="#8a8a98"/><rect x="1214" y="713" width="34" height="11" rx="2" fill="none" stroke="#8a8a98"/><rect x="1260" y="713" width="22" height="11" rx="2" fill="none" stroke="#8a8a98"/><rect x="1293" y="713" width="24" height="11" rx="2" fill="none" stroke="#8a8a98"/><rect x="1328" y="713" width="22" height="11" rx="2" fill="none" stroke="#8a8a98"/></g>
<!-- dock -->
<rect x="98" y="918" width="1424" height="76" rx="17" fill="#efe6e2" fill-opacity=".85" stroke="#fff" stroke-opacity=".5" stroke-width="1.500"/>
<rect x="106" y="928" width="56" height="56" rx="12.9" fill="#e6ecf4"/><path d="M118.9 928h17.9v56h-17.9a12.9 12.9 0 0 1 -12.9 -12.9v-30.2a12.9 12.9 0 0 1 12.9 -12.9z" fill="#2a9ef5"/><rect x="175.2" y="928" width="56" height="56" rx="12.9" fill="#d9d3de"/><rect x="184.7" y="937.5" width="9.5" height="9.5" rx="2.2" fill="#4cd964"/><rect x="198.7" y="937.5" width="9.5" height="9.5" rx="2.2" fill="#ffb400"/><rect x="212.7" y="937.5" width="9.5" height="9.5" rx="2.2" fill="#ff7a1a"/><rect x="184.7" y="951.5" width="9.5" height="9.5" rx="2.2" fill="#ff3b30"/><rect x="198.7" y="951.5" width="9.5" height="9.5" rx="2.2" fill="#9a9aa0"/><rect x="212.7" y="951.5" width="9.5" height="9.5" rx="2.2" fill="#ff2d78"/><rect x="184.7" y="965.5" width="9.5" height="9.5" rx="2.2" fill="#b150e0"/><rect x="198.7" y="965.5" width="9.5" height="9.5" rx="2.2" fill="#2a9ef5"/><rect x="212.7" y="965.5" width="9.5" height="9.5" rx="2.2" fill="#30d0b0"/><rect x="244.4" y="928" width="56" height="56" rx="12.9" fill="#f2f2f6"/><circle cx="272.4" cy="956" r="22.4" fill="#2b8cf0"/><path d="M258.4 970L269 952.6L275.8 959.4z" fill="#fff"/><path d="M286.4 942L269 952.6L275.8 959.4z" fill="#ff4040"/><rect x="313.6" y="928" width="56" height="56" rx="12.9" fill="#36d45a"/><ellipse cx="341.6" cy="954.3" rx="18.5" ry="15.1" fill="#eefaee"/><rect x="382.8" y="928" width="56" height="56" rx="12.9" fill="#2590f2"/><rect x="391.8" y="943.7" width="38.1" height="24.6" rx="2.8" fill="#eef2f6"/><path d="M392.9 944.8L410.8 959.4L428.7 944.8" fill="none" stroke="#9aa6b4" stroke-width="2.2"/><rect x="452" y="928" width="56" height="56" rx="12.9" fill="#7ad088"/><path d="M485.6 930.8h16.8v28h-16.8z" fill="#f0efe8"/><path d="M468.8 928h9v28h-9z" fill="#3c8cf0"/><circle cx="474.4" cy="962.7" r="11.2" fill="#2a84f0" stroke="#fff" stroke-width="2.8"/><rect x="521.2" y="928" width="56" height="56" rx="12.9" fill="#f7f5f7"/><ellipse cx="549.2" cy="945.4" rx="10.6" ry="6.2" fill="#ff9a30" fill-opacity=".85" transform="rotate(-90 549.2 945.4)"/><ellipse cx="556.7" cy="948.5" rx="10.6" ry="6.2" fill="#ffd030" fill-opacity=".85" transform="rotate(-45 556.7 948.5)"/><ellipse cx="559.8" cy="956" rx="10.6" ry="6.2" fill="#9bd84a" fill-opacity=".85" transform="rotate(0 559.8 956)"/><ellipse cx="556.7" cy="963.5" rx="10.6" ry="6.2" fill="#40c8a0" fill-opacity=".85" transform="rotate(45 556.7 963.5)"/><ellipse cx="549.2" cy="966.6" rx="10.6" ry="6.2" fill="#48a0f0" fill-opacity=".85" transform="rotate(90 549.2 966.6)"/><ellipse cx="541.7" cy="963.5" rx="10.6" ry="6.2" fill="#8a70e0" fill-opacity=".85" transform="rotate(135 541.7 963.5)"/><ellipse cx="538.6" cy="956" rx="10.6" ry="6.2" fill="#e060a8" fill-opacity=".85" transform="rotate(180 538.6 956)"/><ellipse cx="541.7" cy="948.5" rx="10.6" ry="6.2" fill="#f46048" fill-opacity=".85" transform="rotate(225 541.7 948.5)"/><rect x="590.4" y="928" width="56" height="56" rx="12.9" fill="#34cf56"/><rect x="598.8" y="945.9" width="25.2" height="20.2" rx="4.5" fill="#e8f6ea"/><path d="M626.2 956L638 947V965z" fill="#e8f6ea"/><rect x="659.6" y="928" width="56" height="56" rx="12.9" fill="#f8f6f8"/><path d="M659.6 940.9a12.9 12.9 0 0 1 12.9 -12.9h30.2a12.9 12.9 0 0 1 12.9 12.9v3.4h-56z" fill="#f2473f"/><rect x="682" y="953.2" width="11.2" height="19.6" fill="#3a3a3c"/><rect x="728.8" y="928" width="56" height="56" rx="12.9" fill="#b98a52"/><circle cx="756.8" cy="956" r="15.1" fill="none" stroke="#a37640" stroke-width="2.8"/><rect x="798" y="928" width="56" height="56" rx="12.9" fill="#f8f6f9"/><circle cx="809.2" cy="943.1" r="3.9" fill="#2a84f0"/><path d="M818.2 943.1h29.1" stroke="#c8c6cc" stroke-width="2"/><circle cx="809.2" cy="956.3" r="3.9" fill="#f0483e"/><path d="M818.2 956.3h29.1" stroke="#c8c6cc" stroke-width="2"/><circle cx="809.2" cy="969.4" r="3.9" fill="#f59a23"/><path d="M818.2 969.4h29.1" stroke="#c8c6cc" stroke-width="2"/><rect x="867.2" y="928" width="56" height="56" rx="12.9" fill="#f6f2ea"/><path d="M867.2 940.9a12.9 12.9 0 0 1 12.9 -12.9h30.2a12.9 12.9 0 0 1 12.9 12.9v2.2h-56z" fill="#fccf2f"/><rect x="936.4" y="928" width="56" height="56" rx="12.9" fill="#151517"/><rect x="947.6" y="950.4" width="33.6" height="12.3" fill="#e8e8ea"/><rect x="1005.6" y="928" width="56" height="56" rx="12.9" fill="#f5405a"/><path d="M1028 967.2V944.8L1045.9 940.3V962.7" fill="none" stroke="#fff" stroke-width="3.9"/><circle cx="1024.1" cy="967.2" r="5" fill="#fff"/><circle cx="1042" cy="963.3" r="5" fill="#fff"/><rect x="1074.8" y="928" width="56" height="56" rx="12.9" fill="#9a45da"/><circle cx="1102.8" cy="952.6" r="15.1" fill="none" stroke="#fff" stroke-width="3.4"/><circle cx="1102.8" cy="951.5" r="5" fill="#fff"/><rect x="1099.4" y="958.2" width="6.7" height="16.8" rx="3.4" fill="#fff"/><rect x="1144" y="928" width="56" height="56" rx="12.9" fill="#f8f6f8"/><path d="M1155.2 939.2h12.3L1188.8 972.8h-12.3z" fill="#f23b52"/><rect x="1213.2" y="928" width="56" height="56" rx="12.9" fill="#1b8ff5"/><path d="M1239.5 940.3L1253.5 969.4M1244 940.3L1228.9 969.4M1223.3 961.6h35.8" stroke="#fff" stroke-width="4.2" fill="none" stroke-linecap="round"/><rect x="1282.4" y="928" width="56" height="56" rx="12.9" fill="#8c8c90"/><circle cx="1310.4" cy="956" r="20.2" fill="#4a4a4e" stroke="#c8c8cc" stroke-width="2.8"/><circle cx="1310.4" cy="956" r="6.7" fill="#8c8c90"/><path d="M1364.1 928v56" stroke="#fff" stroke-opacity=".35" stroke-width="1.7"/><path d="M1381.5 934.7h16.8l4.5 5.6h30.2v33.6h-51.5z" fill="#4fb4f2"/><rect x="1381.5" y="942.6" width="51.5" height="33.6" rx="3.4" fill="#6cc6f8"/><path d="M1458.6 932.5h35.8l-4.5 47h-26.9z" fill="#e4e2e8" fill-opacity=".9"/>
</svg>
</div>
<div class="thumb" style="left:435.500px;top:458.500px;width:378px;height:233.500px;">
<svg width="378" height="233.500" viewBox="50.800 42.700 1536.600 949.200" preserveAspectRatio="none">
<defs>
<linearGradient id="t5a" x1="0" y1="0" x2="0" y2="1"><stop offset="0" stop-color="#d816b2"/><stop offset=".5" stop-color="#c014b6"/><stop offset=".8" stop-color="#8014c0"/><stop offset="1" stop-color="#6212bc"/></linearGradient>
<linearGradient id="t5b" x1="0" y1="0" x2="0" y2="1"><stop offset="0" stop-color="#e8c4e2"/><stop offset=".25" stop-color="#e89cc8"/><stop offset=".6" stop-color="#dc5cb0"/><stop offset="1" stop-color="#b82cc4"/></linearGradient>
<linearGradient id="t5m" x1="0" y1="0" x2="1" y2="0"><stop offset=".2" stop-color="#000"/><stop offset=".55" stop-color="#fff"/></linearGradient>
<mask id="t5mk"><rect x="40" y="40" width="1560" height="960" fill="url(#t5m)"/></mask>
<linearGradient id="t5r" x1="0" y1="0" x2="1" y2="1"><stop offset="0" stop-color="#f06060"/><stop offset=".25" stop-color="#f8c040"/><stop offset=".5" stop-color="#60c8a0"/><stop offset=".75" stop-color="#50a0e0"/><stop offset="1" stop-color="#c080d0"/></linearGradient>
<linearGradient id="t5dk" x1="0" y1="0" x2="1" y2="0"><stop offset="0" stop-color="#a08af4"/><stop offset=".5" stop-color="#c08cf0"/><stop offset="1" stop-color="#e08ce0"/></linearGradient>
<filter id="t5f" filterUnits="userSpaceOnUse" x="0" y="0" width="1640" height="1030"><feGaussianBlur stdDeviation="7"/></filter>
<clipPath id="t5w"><rect x="102" y="95" width="1431" height="791" rx="10"/></clipPath>
<clipPath id="t5k2"><rect x="646" y="290" width="269" height="267" rx="5"/></clipPath>
<clipPath id="t5k1"><rect x="358" y="290" width="269" height="267" rx="5"/></clipPath>
</defs>
<rect x="50" y="42" width="1540" height="952" fill="url(#t5a)"/>
<rect x="50" y="42" width="1540" height="952" fill="url(#t5b)" mask="url(#t5mk)"/>
<path d="M50 800 C400 830 900 900 1200 994 L50 994Z" fill="#5a10b8" opacity=".55" filter="url(#t5f)"/>
<!-- menubar -->
<rect x="50" y="42" width="1540" height="21" fill="#ecc2e0"/>
<g font-size="13" fill="#2a1828"><circle cx="77" cy="53" r="5.500"/><text x="106" y="58" font-weight="700">Notes</text><text x="166" y="58">File</text><text x="212" y="58">Edit</text><text x="259" y="58">Format</text><text x="329" y="58">View</text><text x="382" y="58">Window</text><text x="455" y="58">Help</text><text x="1434" y="58">Mon Jun 7&#160; 9:41 AM</text><rect x="1284" y="48" width="24" height="10" rx="3"/><path d="M1329 50a13 13 0 0 1 18 0l-9 10z"/><circle cx="1377" cy="53" r="4.500" fill="none" stroke="#2a1828" stroke-width="2"/><rect x="1403" y="47" width="13" height="12" rx="3"/></g>
<!-- Podcasts window -->
<rect x="99" y="93" width="1437" height="798" rx="12" fill="#30005a" fill-opacity=".3" filter="url(#t5f)"/>
<g clip-path="url(#t5w)">
<rect x="102" y="95" width="1431" height="791" fill="#fff"/>
<rect x="317" y="560" width="1216" height="140" fill="#f6f6f8"/>
<rect x="102" y="95" width="215" height="791" fill="#ececf0"/>
<g fill="#d4d4da"><circle cx="130" cy="123" r="4.500"/><text x="146" y="128" font-size="11" fill="#d0d0d6">Podcasts</text></g>
<rect x="116" y="158" width="186" height="25" rx="6" fill="#dfdfe5"/><rect x="116" y="225" width="186" height="26" rx="6" fill="#d8d8de"/>
<g font-size="12.500" fill="#a8a8b0"><text x="142" y="176" fill="#c0c0c8">Search</text><text x="120" y="212" font-size="9.500" fill="#c4c4cc">Apple Podcasts</text><text x="148" y="243" fill="#6a6a72">Listen Now</text><text x="148" y="272">Browse</text><text x="148" y="302">Top Charts</text><text x="120" y="333" font-size="9.500" fill="#c4c4cc">Library</text><text x="148" y="364">Shows</text><text x="148" y="394">Saved</text><text x="148" y="424">Downloaded</text><text x="148" y="454">Latest Episodes</text></g>
<g fill="#b8a4e0"><circle cx="130" cy="238" r="5.500"/><circle cx="130" cy="267" r="5.500"/><circle cx="130" cy="297" r="5.500" fill="#c8c8d0"/><circle cx="130" cy="359" r="5" fill="#c8c8d0"/><circle cx="130" cy="389" r="5" fill="#c8c8d0"/><circle cx="130" cy="419" r="5"/><circle cx="130" cy="449" r="5" fill="#c8c8d0"/></g>
<g fill="#c4c4cc"><circle cx="450" cy="124" r="8" fill="none" stroke="#c8c8d0" stroke-width="2"/><path d="M480 114v20l17-10z" fill="#8a8a92"/><circle cx="524" cy="124" r="8" fill="none" stroke="#c8c8d0" stroke-width="2"/><rect x="1228" y="123" width="100" height="3" rx="1.500"/><circle cx="1435" cy="124" r="8"/><circle cx="1470" cy="124" r="8" fill="none" stroke="#c8c8d0" stroke-width="2"/><rect x="1496" y="118" width="14" height="2.500"/><rect x="1496" y="123" width="14" height="2.500"/><rect x="1496" y="128" width="14" height="2.500"/></g>
<rect x="658" y="102" width="44" height="44" rx="4" fill="#1a9aa8"/><rect x="668" y="112" width="24" height="26" rx="4" fill="#f06a50"/><rect x="664" y="106" width="32" height="8" fill="#f8d040"/>
<g font-size="10" fill="#5a5a62"><text x="830" y="118" font-weight="700">Body Stuff with Dr. Jen Gunter</text><text x="820" y="134" fill="#b0b0b8">Rebel Eaters Club — May 26, 2021</text></g><rect x="706" y="144" width="440" height="2" fill="#e0e0e6"/>
<text x="360" y="222" font-size="36" font-weight="700" fill="#1d1d1f" letter-spacing="-.6">Listen Now</text>
<text x="360" y="270" font-size="17" font-weight="700" fill="#1d1d1f">Up Next</text><text x="1442" y="270" font-size="12.500" font-weight="700" fill="#5a44e0">See All</text>
<!-- tile 1 -->
<g clip-path="url(#t5k1)"><rect x="358" y="290" width="269" height="267" fill="#1a94a4"/>
<path d="M410 557v-110c0-30 70-30 70 0v110z" fill="#f050a8"/><path d="M445 557v-60c0-50 100-50 100 0v60z" fill="#f8a028"/><path d="M530 557v-110c0-30 75-30 75 0v110z" fill="#e82838"/>
<ellipse cx="422" cy="430" rx="42" ry="34" fill="#f0502c"/><ellipse cx="500" cy="420" rx="40" ry="32" fill="#e8302c"/><ellipse cx="575" cy="432" rx="38" ry="34" fill="#f048a0"/>
<path d="M440 385l58-32 56 32z" fill="#f4f0ee"/><circle cx="398" cy="350" r="20" fill="#f8a8c8"/><circle cx="410" cy="375" r="18" fill="#f8a8c8"/><path d="M560 340l30-14 14 36-26 24z" fill="#30c890"/><circle cx="540" cy="372" r="14" fill="#e82838"/>
<path d="M470 470l20 30-16 34M520 470l-14 40 20 30M490 500h34" stroke="#fff4d8" stroke-width="5" fill="none"/></g>
<text x="425" y="316" font-size="9" fill="#c8f0f0" letter-spacing="2">TRANSMITTER MEDIA</text><g font-size="20" font-weight="700" fill="#fff" font-style="italic"><text x="388" y="438">REBEL</text><text x="472" y="428">EATERS</text><text x="548" y="440">CLUB</text></g>
<!-- tile 2 -->
<g clip-path="url(#t5k2)"><rect x="646" y="290" width="269" height="267" fill="#fbf6e4"/><path d="M646 290h60l-30 40 40-8-50 70 10-50-30 12z" fill="#e82838"/>
<path d="M800 557c20-60 60-120 115-140v-50c-60 30-120 90-150 190z" fill="#f8b820"/><path d="M840 557c20-40 40-70 75-90v-50c-50 30-90 80-115 140z" fill="#30b8a0"/><path d="M646 500c30 10 60 30 80 57h-80z" fill="#e82838"/>
<ellipse cx="706" cy="418" rx="52" ry="48" fill="#1a1614"/><ellipse cx="706" cy="440" rx="30" ry="36" fill="#6a5a52"/><path d="M660 557c0-50 20-70 46-72c30 2 50 22 52 72z" fill="#e8e4dc"/>
<ellipse cx="812" cy="452" rx="40" ry="46" fill="#2a2420"/><ellipse cx="814" cy="462" rx="30" ry="36" fill="#4a4038"/><path d="M740 557c4-40 30-58 70-60c44 2 68 24 72 60z" fill="#22408a"/></g>
<g font-size="46" font-weight="700" fill="#141210" transform="rotate(-8 800 340)"><text x="712" y="350" textLength="128" lengthAdjust="spacingAndGlyphs">BACK</text><text x="768" y="396" textLength="140" lengthAdjust="spacingAndGlyphs">ISSUE</text></g>
<!-- tile 3 -->
<rect x="935" y="290" width="269" height="267" rx="5" fill="#20e6ae"/><rect x="962" y="322" width="215" height="235" fill="#f4f4f2"/><path d="M962 322h215" stroke="#1a8a70" stroke-width="3" stroke-dasharray="3 7"/>
<g font-size="22" fill="#3a3a3a" font-family="Liberation Mono, monospace"><text x="978" y="407" textLength="120" lengthAdjust="spacingAndGlyphs">THIS IS</text><text x="978" y="432" textLength="182" lengthAdjust="spacingAndGlyphs">UNCOMFORTABLE</text></g><rect x="980" y="495" width="60" height="3" fill="#3a3a3a"/><text x="980" y="512" font-size="10" font-weight="700" fill="#3a3a3a">FROM</text>
<!-- tile 4 -->
<rect x="1223" y="290" width="269" height="267" rx="5" fill="#080808"/><g fill="none" stroke="#3a3a3a" stroke-width="2"><path d="M1250 310v60h60v-60M1310 340h90v70h-60v60M1400 340v-30M1250 440h60v90h90v-50h70M1460 310v100h-60M1340 470v60"/></g><g fill="#4a4a4a"><circle cx="1455" cy="328" r="11"/><circle cx="1262" cy="372" r="12"/><circle cx="1418" cy="368" r="10"/><circle cx="1472" cy="440" r="13"/><circle cx="1415" cy="488" r="10"/></g>
<text x="1340" y="322" font-size="18" font-weight="700" fill="#fff" font-family="Liberation Serif, serif">Vox</text><rect x="1244" y="384" width="50" height="34" fill="#fbfbf4"/><rect x="1290" y="384" width="180" height="34" fill="#e6ee3a"/><text x="1251" y="412" font-size="30" font-weight="700" fill="#111" textLength="212" lengthAdjust="spacingAndGlyphs">Unexplainable</text>
<!-- captions -->
<g font-size="9" fill="#a0a0a8"><text x="360" y="578">2ND · 30 MIN LEFT</text><text x="648" y="578">WED · 52 MIN</text><text x="936" y="578">MAY · 14 MIN</text></g>
<g font-size="13.500" font-weight="700" fill="#1d1d1f"><text x="360" y="599">Body Stuff with Dr. Jen Gunter</text><text x="648" y="599">Remember When We Found</text><text x="648" y="620">Ourselves? (Feat. Jill Scott and</text><text x="648" y="641">Perry Fair)</text><text x="936" y="599">On April</text><text x="1410" y="599">bjects</text></g>
<g font-size="11" fill="#b4b4bc"><text x="360" y="619" textLength="246" lengthAdjust="spacingAndGlyphs">Menstruating accomplished is how to</text><text x="360" y="636" textLength="250" lengthAdjust="spacingAndGlyphs">think and is down. Body Stuff Where Jen…</text><text x="936" y="619">The wealth</text><text x="1410" y="619">re. Julia</text><text x="1410" y="636">ry. Are…</text></g>
<g font-size="10.500" fill="#5a44e0"><text x="360" y="657">Rebel Eaters Club</text><text x="648" y="663">Back Issue</text><text x="936" y="657">This Is Unc</text></g>
<rect x="317" y="700" width="1216" height="186" fill="#fff"/>
<text x="360" y="726" font-size="16" font-weight="700" fill="#1d1d1f">You Might Like</text><text x="360" y="752" font-size="12" fill="#a8a8b0">Based on your listening</text><text x="1442" y="726" font-size="12.500" font-weight="700" fill="#5a44e0">See All</text>
<!-- bottom tiles -->
<rect x="358" y="772" width="210" height="120" rx="5" fill="#173f52"/><path d="M400 840c30-40 100-40 130 0v52H400z" fill="#30a8b8"/><path d="M420 860c20-20 70-20 90 0v32h-90z" fill="#f8c030"/><circle cx="386" cy="800" r="13" fill="#e83030"/><g font-size="18" font-weight="700" fill="#fff"><text x="432" y="832">HOW</text><text x="420" y="858">TO BE A</text></g>
<rect x="590" y="772" width="210" height="120" rx="5" fill="#050505"/><circle cx="655" cy="870" r="42" fill="#f4f4f4"/><circle cx="745" cy="875" r="45" fill="#e83030"/><path d="M715 850h60v-14c-10-10-50-10-60 0z" fill="#050505"/><text x="625" y="880" font-size="24" font-weight="700" fill="#e83030">I SPY</text>
<rect x="820" y="772" width="210" height="120" rx="5" fill="#c8ccd0"/><path d="M930 892c20-60 60-100 100-110v110z" fill="url(#t5r)"/><g font-size="28" font-weight="700" fill="#2a2a30"><text x="842" y="849">YOU'RE</text><text x="842" y="887">WRONG</text></g><g font-size="28" font-weight="700" fill="#fff"><text x="839" y="846">YOU'RE</text><text x="839" y="884">WRONG</text></g>
<rect x="1051" y="772" width="210" height="120" rx="5" fill="#1e8fa0"/><g font-size="42" font-weight="700" fill="#e8f4f0" font-family="Liberation Serif, serif"><text x="1060" y="836" textLength="192" lengthAdjust="spacingAndGlyphs">Midnight</text><text x="1096" y="876" textLength="160" lengthAdjust="spacingAndGlyphs">Miracle</text></g><text x="1140" y="796" font-size="11" fill="#e8f4f0">The</text>
<rect x="1282" y="772" width="210" height="120" rx="5" fill="#e0601c"/><text x="1292" y="816" font-size="36" font-weight="700" fill="#fbe8d0" textLength="190" lengthAdjust="spacingAndGlyphs" font-family="Liberation Serif, serif">SHATTERED</text><path d="M1300 892c20-50 150-50 180 0z" fill="#8a3a18"/><path d="M1310 850l20 20 20-24 24 26 22-22 24 24 20-20" stroke="#f8c890" stroke-width="5" fill="none"/>
</g>
<!-- Notes popup -->
<rect x="994" y="428" width="416" height="330" rx="14" fill="#2a0a50" fill-opacity=".28" filter="url(#t5f)"/>
<rect x="1000" y="432" width="403" height="316" rx="11" fill="#fdfdfd"/>
<circle cx="1025" cy="458" r="6" fill="#f4574e"/><circle cx="1047" cy="458" r="6" fill="#f8bc2e"/><circle cx="1069" cy="458" r="6" fill="#2cc640"/>
<text x="1097" y="464" font-size="13.500" font-weight="700" fill="#8a8a92">Road trip podcast</text><text x="1270" y="464" font-size="14" fill="#a0a0a8">Aa</text><circle cx="1327" cy="458" r="8" fill="none" stroke="#a0a0a8" stroke-width="2"/><text x="1376" y="463" font-size="13" fill="#a0a0a8">»</text>
<text x="1128" y="507" font-size="9.500" fill="#d0d0d6">June 7, 2021 at 9:41 AM</text>
<text x="1024" y="541" font-size="19.500" fill="#4a4a52" font-weight="700" textLength="180" lengthAdjust="spacingAndGlyphs">Road trip podcast</text>
<rect x="1024" y="557" width="308" height="61" rx="5" fill="#ececf0"/><g font-size="9.500" fill="#3a3a42"><text x="1042" y="575" font-weight="700">Body Stuff with Dr. Jen Gunter</text><text x="1042" y="591">Rebel Eaters Club · May 26, 2021</text><text x="1042" y="607" fill="#8a8a92">■ Podcasts</text></g>
<rect x="1278" y="565" width="44" height="45" rx="3" fill="#1a9aa8"/><rect x="1288" y="578" width="24" height="26" rx="4" fill="#f06a50"/><rect x="1284" y="569" width="32" height="8" fill="#f8d040"/>
<!-- dock -->
<rect x="142" y="930" width="1352" height="62" rx="15" fill="url(#t5dk)" fill-opacity=".88" stroke="#fff" stroke-opacity=".3" stroke-width="1.500"/>
<rect x="150" y="937" width="48" height="48" rx="11" fill="#e6ecf4"/><path d="M161 937h15.4v48h-15.4a11 11 0 0 1 -11 -11v-25.9a11 11 0 0 1 11 -11z" fill="#2a9ef5"/><rect x="208.2" y="937" width="48" height="48" rx="11" fill="#d9d3de"/><rect x="216.4" y="945.2" width="8.2" height="8.2" rx="1.9" fill="#4cd964"/><rect x="228.4" y="945.2" width="8.2" height="8.2" rx="1.9" fill="#ffb400"/><rect x="240.4" y="945.2" width="8.2" height="8.2" rx="1.9" fill="#ff7a1a"/><rect x="216.4" y="957.2" width="8.2" height="8.2" rx="1.9" fill="#ff3b30"/><rect x="228.4" y="957.2" width="8.2" height="8.2" rx="1.9" fill="#9a9aa0"/><rect x="240.4" y="957.2" width="8.2" height="8.2" rx="1.9" fill="#ff2d78"/><rect x="216.4" y="969.2" width="8.2" height="8.2" rx="1.9" fill="#b150e0"/><rect x="228.4" y="969.2" width="8.2" height="8.2" rx="1.9" fill="#2a9ef5"/><rect x="240.4" y="969.2" width="8.2" height="8.2" rx="1.9" fill="#30d0b0"/><rect x="266.4" y="937" width="48" height="48" rx="11" fill="#f2f2f6"/><circle cx="290.4" cy="961" r="19.2" fill="#2b8cf0"/><path d="M278.4 973L287.5 958.1L293.3 963.9z" fill="#fff"/><path d="M302.4 949L287.5 958.1L293.3 963.9z" fill="#ff4040"/><rect x="324.6" y="937" width="48" height="48" rx="11" fill="#36d45a"/><ellipse cx="348.6" cy="959.6" rx="15.8" ry="13" fill="#eefaee"/><rect x="382.8" y="937" width="48" height="48" rx="11" fill="#2590f2"/><rect x="390.5" y="950.4" width="32.6" height="21.1" rx="2.4" fill="#eef2f6"/><path d="M391.4 951.4L406.8 963.9L422.2 951.4" fill="none" stroke="#9aa6b4" stroke-width="1.9"/><rect x="441" y="937" width="48" height="48" rx="11" fill="#7ad088"/><path d="M469.8 939.4h14.4v24h-14.4z" fill="#f0efe8"/><path d="M455.4 937h7.7v24h-7.7z" fill="#3c8cf0"/><circle cx="460.2" cy="966.8" r="9.6" fill="#2a84f0" stroke="#fff" stroke-width="2.4"/><rect x="499.2" y="937" width="48" height="48" rx="11" fill="#f7f5f7"/><ellipse cx="523.2" cy="951.9" rx="9.1" ry="5.3" fill="#ff9a30" fill-opacity=".85" transform="rotate(-90 523.2 951.9)"/><ellipse cx="529.6" cy="954.6" rx="9.1" ry="5.3" fill="#ffd030" fill-opacity=".85" transform="rotate(-45 529.6 954.6)"/><ellipse cx="532.3" cy="961" rx="9.1" ry="5.3" fill="#9bd84a" fill-opacity=".85" transform="rotate(0 532.3 961)"/><ellipse cx="529.6" cy="967.4" rx="9.1" ry="5.3" fill="#40c8a0" fill-opacity=".85" transform="rotate(45 529.6 967.4)"/><ellipse cx="523.2" cy="970.1" rx="9.1" ry="5.3" fill="#48a0f0" fill-opacity=".85" transform="rotate(90 523.2 970.1)"/><ellipse cx="516.8" cy="967.4" rx="9.1" ry="5.3" fill="#8a70e0" fill-opacity=".85" transform="rotate(135 516.8 967.4)"/><ellipse cx="514.1" cy="961" rx="9.1" ry="5.3" fill="#e060a8" fill-opacity=".85" transform="rotate(180 514.1 961)"/><ellipse cx="516.8" cy="954.6" rx="9.1" ry="5.3" fill="#f46048" fill-opacity=".85" transform="rotate(225 516.8 954.6)"/><rect x="557.4" y="937" width="48" height="48" rx="11" fill="#34cf56"/><rect x="564.6" y="952.4" width="21.6" height="17.3" rx="3.8" fill="#e8f6ea"/><path d="M588.1 961L598.2 953.3V968.7z" fill="#e8f6ea"/><rect x="615.6" y="937" width="48" height="48" rx="11" fill="#f8f6f8"/><path d="M615.6 948a11 11 0 0 1 11 -11h25.9a11 11 0 0 1 11 11v2.9h-48z" fill="#f2473f"/><rect x="634.8" y="958.6" width="9.6" height="16.8" fill="#3a3a3c"/><rect x="673.8" y="937" width="48" height="48" rx="11" fill="#b98a52"/><circle cx="697.8" cy="961" r="13" fill="none" stroke="#a37640" stroke-width="2.4"/><rect x="732" y="937" width="48" height="48" rx="11" fill="#f8f6f9"/><circle cx="741.6" cy="950" r="3.4" fill="#2a84f0"/><path d="M749.3 950h25" stroke="#c8c6cc" stroke-width="1.7"/><circle cx="741.6" cy="961.2" r="3.4" fill="#f0483e"/><path d="M749.3 961.2h25" stroke="#c8c6cc" stroke-width="1.7"/><circle cx="741.6" cy="972.5" r="3.4" fill="#f59a23"/><path d="M749.3 972.5h25" stroke="#c8c6cc" stroke-width="1.7"/><rect x="790.2" y="937" width="48" height="48" rx="11" fill="#f6f2ea"/><path d="M790.2 948a11 11 0 0 1 11 -11h25.9a11 11 0 0 1 11 11v1.9h-48z" fill="#fccf2f"/><rect x="848.4" y="937" width="48" height="48" rx="11" fill="#151517"/><rect x="858" y="956.2" width="28.8" height="10.6" fill="#e8e8ea"/><rect x="906.6" y="937" width="48" height="48" rx="11" fill="#f5405a"/><path d="M925.8 970.6V951.4L941.2 947.6V966.8" fill="none" stroke="#fff" stroke-width="3.4"/><circle cx="922.4" cy="970.6" r="4.3" fill="#fff"/><circle cx="937.8" cy="967.2" r="4.3" fill="#fff"/><rect x="964.8" y="937" width="48" height="48" rx="11" fill="#9a45da"/><circle cx="988.8" cy="958.1" r="13" fill="none" stroke="#fff" stroke-width="2.9"/><circle cx="988.8" cy="957.2" r="4.3" fill="#fff"/><rect x="985.9" y="962.9" width="5.8" height="14.4" rx="2.9" fill="#fff"/><rect x="1023" y="937" width="48" height="48" rx="11" fill="#f8f6f8"/><path d="M1032.6 946.6h10.6L1061.4 975.4h-10.6z" fill="#f23b52"/><rect x="1081.2" y="937" width="48" height="48" rx="11" fill="#f4f6fa"/><rect x="1090.8" y="946.6" width="28.8" height="14.4" fill="#2a8cf0"/><rect x="1103.3" y="961" width="3.8" height="14.4" fill="#8a8a90"/><rect x="1139.4" y="937" width="48" height="48" rx="11" fill="#2fc04e"/><rect x="1149" y="963.4" width="7.2" height="12" fill="#fff"/><rect x="1159.6" y="956.2" width="7.2" height="19.2" fill="#fff"/><rect x="1170.1" y="947.6" width="7.2" height="27.8" fill="#fff"/><rect x="1197.6" y="937" width="48" height="48" rx="11" fill="#f6f2ea"/><path d="M1209.6 973L1233.6 947.6" stroke="#f59a23" stroke-width="6.2" stroke-linecap="round"/><rect x="1255.8" y="937" width="48" height="48" rx="11" fill="#1b8ff5"/><path d="M1278.4 947.6L1290.4 972.5M1282.2 947.6L1269.2 972.5M1264.4 965.8h30.7" stroke="#fff" stroke-width="3.6" fill="none" stroke-linecap="round"/><rect x="1314" y="937" width="48" height="48" rx="11" fill="#8c8c90"/><circle cx="1338" cy="961" r="17.3" fill="#4a4a4e" stroke="#c8c8cc" stroke-width="2.4"/><circle cx="1338" cy="961" r="5.8" fill="#8c8c90"/><path d="M1382.7 937v48" stroke="#fff" stroke-opacity=".35" stroke-width="1.4"/><path d="M1397.4 942.8h14.4l3.8 4.8h25.9v28.8h-44.2z" fill="#4fb4f2"/><rect x="1397.4" y="949.5" width="44.2" height="28.8" rx="2.9" fill="#6cc6f8"/><path d="M1462.3 940.8h30.7l-3.8 40.3h-23z" fill="#e4e2e8" fill-opacity=".9"/>
</svg>
</div>
<div class="thumb" style="left:838.700px;top:458.500px;width:378.300px;height:233.500px;">
<svg width="378.300" height="233.500" viewBox="43.500 42.700 1537.800 949.200" preserveAspectRatio="none">
<defs>
<linearGradient id="t6a" x1="0" y1="0" x2="0" y2="1"><stop offset="0" stop-color="#0c0c24"/><stop offset=".12" stop-color="#10163c"/><stop offset=".5" stop-color="#08081c"/><stop offset="1" stop-color="#0a0818"/></linearGradient>
<linearGradient id="t6w" x1="0" y1="0" x2="0" y2="1"><stop offset="0" stop-color="#1b72ea"/><stop offset=".5" stop-color="#1a66d8"/><stop offset="1" stop-color="#1450b0"/></linearGradient>
<linearGradient id="t6e" x1="0" y1="0" x2=".5" y2="1"><stop offset="0" stop-color="#a27c42"/><stop offset=".3" stop-color="#74603c"/><stop offset=".65" stop-color="#453e34"/><stop offset="1" stop-color="#26242c"/></linearGradient>
<linearGradient id="t6e2" x1="0" y1="0" x2="0" y2="1"><stop offset="0" stop-color="#eaa448"/><stop offset=".45" stop-color="#c88a3c"/><stop offset="1" stop-color="#5a4a30"/></linearGradient>
<linearGradient id="t6l" x1="0" y1="0" x2="0" y2="1"><stop offset="0" stop-color="#c0208c"/><stop offset=".4" stop-color="#e41c6a"/><stop offset="1" stop-color="#e8143c"/></linearGradient><linearGradient id="t6l2" x1="0" y1="0" x2="0" y2="1"><stop offset="0" stop-color="#e8143c"/><stop offset="1" stop-color="#c01450"/></linearGradient>
<linearGradient id="t6s" x1="0" y1="0" x2="1" y2="1"><stop offset="0" stop-color="#120a50"/><stop offset="1" stop-color="#0c0838"/></linearGradient>
<filter id="t6f" filterUnits="userSpaceOnUse" x="0" y="0" width="1640" height="1030"><feGaussianBlur stdDeviation="5"/></filter>
<filter id="t6f2" filterUnits="userSpaceOnUse" x="0" y="0" width="1640" height="1030"><feGaussianBlur stdDeviation="1.800"/></filter>
<clipPath id="t6c"><path d="M805 158h708v729a10 10 0 0 1-10 10H805z"/></clipPath>
</defs>
<rect x="40" y="42" width="1545" height="952" fill="url(#t6a)"/>
<g filter="url(#t6f)">
<path d="M43 70 C300 60 900 70 1585 75 L1585 110 L43 110Z" fill="#14204e"/>
<path d="M43 100 L95 85 L95 445 L43 445Z" fill="url(#t6l)"/><path d="M43 440 L95 440 L95 655 L43 655Z" fill="#f8e2e0"/><path d="M43 650 L95 650 L95 905 L43 905Z" fill="url(#t6l2)"/>
<path d="M1510 70 C1560 90 1585 150 1585 260 L1585 70Z" fill="#f09030"/><path d="M1510 80 C1555 110 1575 190 1570 330" fill="none" stroke="#e8287a" stroke-width="26"/><path d="M1585 140 C1590 240 1580 300 1560 360" fill="none" stroke="#c020a0" stroke-width="16"/>
<ellipse cx="1550" cy="520" rx="40" ry="110" fill="#0a5a6a"/><path d="M1585 640 C1580 760 1560 840 1515 900 L1585 900Z" fill="#a8143c"/><path d="M1580 700 C1570 800 1545 860 1515 895" fill="none" stroke="#f0307a" stroke-width="14"/>
<path d="M43 895 C100 915 250 920 330 898 L330 925 L43 960Z" fill="#e0143c"/><path d="M43 940 L90 930 L90 994 L43 994Z" fill="#f4d4d8"/><path d="M300 900 C420 915 560 915 700 898 L700 915 C560 932 420 932 300 920Z" fill="#c01c60"/><path d="M700 898 C900 912 1100 912 1300 898 L1300 908 C1100 926 900 926 700 912Z" fill="#6a1040"/><path d="M1300 898 C1400 912 1480 908 1585 885 L1585 905 C1480 928 1400 928 1300 912Z" fill="#c02470"/>
</g>
<!-- menubar -->
<rect x="40" y="42" width="1545" height="22" fill="#12121a" fill-opacity=".92"/>
<g font-size="13" fill="#f0f0f4"><circle cx="66" cy="53" r="5.500"/><text x="94" y="58" font-weight="700">Playgrounds</text><g fill-opacity=".88"><text x="203" y="58">File</text><text x="249" y="58">Edit</text><text x="296" y="58">Run</text><text x="343" y="58">View</text><text x="397" y="58">Window</text><text x="470" y="58">Help</text><text x="1431" y="58">Mon Oct 4&#160; 9:41 AM</text></g><path d="M1246 58l10-10-3 11z"/><rect x="1281" y="48" width="24" height="10" rx="3"/><path d="M1326 50a13 13 0 0 1 18 0l-9 10z"/><circle cx="1372" cy="53" r="4.500" fill="none" stroke="#f0f0f4" stroke-width="2"/><rect x="1398" y="47" width="13" height="12" rx="3"/></g>
<!-- Playgrounds window -->
<rect x="86" y="98" width="1431" height="804" rx="12" fill="#000" fill-opacity=".5" filter="url(#t6f)"/>
<rect x="90" y="100" width="1423" height="797" rx="10" fill="#232325"/>
<path d="M100 100h1403a10 10 0 0 1 10 10v48H90v-48a10 10 0 0 1 10-10z" fill="#333335"/>
<rect x="90" y="674" width="714" height="223" fill="#2a2a2c"/><rect x="90" y="672" width="714" height="2.500" fill="#161618"/><rect x="803" y="158" width="2.500" height="739" fill="#161618"/>
<circle cx="118" cy="131" r="6" fill="#f4574e"/><circle cx="140" cy="131" r="6" fill="#f8bc2e"/><circle cx="162" cy="131" r="6" fill="#2cc640"/>
<rect x="196" y="123" width="21" height="15" rx="3" fill="none" stroke="#9a9aa0" stroke-width="2"/><text x="233" y="136" font-size="13.500" font-weight="700" fill="#f0f0f2">Learn to Code 1</text>
<g fill="none" stroke="#8a8a90" stroke-width="2"><path d="M695 123l-10 7 10 7z"/><path d="M725 123l10 7-10 7z"/><path d="M773 123v14M766 130h14"/><path d="M1480 128v10h14v-10M1487 133v-14M1482 123l5-5 5 5"/></g>
<g font-size="10.500" fill="#d8d8dc"><text x="127" y="187" textLength="398" lengthAdjust="spacingAndGlyphs"><tspan font-weight="700">Goal:</tspan> Use Swift commands to tell Byte to move and collect a gem.</text><text x="127" y="216" textLength="656" lengthAdjust="spacingAndGlyphs">Your character, Byte, loves to collect gems but can't do it alone. In this first puzzle, you'll need to write Swift</text><text x="127" y="235" textLength="400" lengthAdjust="spacingAndGlyphs"><tspan fill="#3a78e8">commands</tspan> to move Byte across the puzzle world to collect a gem.</text><text x="127" y="264">1&#160;&#160;&#160;&#160; Look for the gem in the puzzle world.</text><text x="127" y="293" textLength="550" lengthAdjust="spacingAndGlyphs">2&#160;&#160;&#160;&#160; Enter the correct combination of the <tspan fill="#6a6a70">moveForward()</tspan> and <tspan fill="#6a6a70">collectGem()</tspan> commands.</text><text x="127" y="322">3&#160;&#160;&#160;&#160; Press Run My Code.</text></g>
<rect x="127" y="339" width="658" height="1.500" fill="#4c4c50"/>
<g font-size="10.500" fill="#e8e8ec" font-family="Liberation Mono, monospace"><text x="127" y="376">collectGem()</text><text x="127" y="404">moveForward()</text></g><rect x="127" y="418" width="1.500" height="16" fill="#9a9aa0"/>
<rect x="769" y="692" width="18" height="16" rx="3" fill="none" stroke="#9a9aa0" stroke-width="2"/><text x="392" y="792" font-size="11.500" fill="#77777d">No Suggestions</text>
<!-- scene -->
<g clip-path="url(#t6c)">
<rect x="805" y="158" width="708" height="739" fill="url(#t6s)"/>
<g filter="url(#t6f2)">
<path d="M838 560 L1140 520 L1140 900 L838 900Z" fill="url(#t6w)"/>
<path d="M838 560 C900 470 960 430 1010 410 L1200 470 L1140 530Z" fill="#1a6ee4"/>
<path d="M1140 520 L1500 400 C1520 520 1460 720 1330 840 C1260 900 1200 905 1140 900Z" fill="url(#t6e)"/>
<path d="M1140 520 L1245 490 L1240 740 C1210 790 1170 800 1140 800Z" fill="url(#t6e2)"/>
<path d="M1010 410 L1090 385 L1400 370 L1500 400 L1140 525 L1040 500Z" fill="#62a82e"/>
<path d="M1010 420 L1180 395 L1215 450 L1060 480Z" fill="#c8a878"/><path d="M1200 400 L1330 380 L1420 400 L1290 445Z" fill="#d8c8a8"/><path d="M1215 450 L1290 445 L1290 500 L1215 515Z" fill="#c88c40"/><path d="M1060 480 L1215 450 L1215 470 L1060 500Z" fill="#8aa8c8"/>
<path d="M990 470 C1040 490 1100 490 1140 470 L1150 520 L1040 530Z" fill="#4a9a28"/>
<path d="M805 560 C800 470 840 400 870 405 C900 410 930 450 940 480 C900 520 860 540 838 565 C830 600 820 630 805 640Z" fill="#c88a28"/><path d="M805 520 C815 560 835 600 830 680 C820 640 810 620 805 610Z" fill="#5a9a30"/>
<path d="M1050 400 C1030 340 1050 270 1075 255 C1080 240 1095 236 1100 246 C1098 260 1090 262 1092 275 C1115 320 1115 380 1100 400 C1085 415 1060 412 1050 400Z" fill="#d88a20"/><path d="M1072 258 C1076 238 1096 234 1102 246 C1098 258 1088 262 1086 270Z" fill="#5aa8a8"/><path d="M1055 400v40M1085 405v30" stroke="#a86818" stroke-width="4"/>
<rect x="1152" y="305" width="24" height="50" rx="6" fill="#4a4a78"/><rect x="1146" y="340" width="36" height="22" rx="6" fill="#3e3e68"/>
<ellipse cx="1125" cy="505" rx="40" ry="30" fill="#5a6890" transform="rotate(-25 1125 505)"/><rect x="1228" y="418" width="62" height="48" rx="8" fill="#5a6494" transform="rotate(8 1260 440)"/>
<ellipse cx="1322" cy="665" rx="48" ry="32" fill="#4a5aa8" transform="rotate(-15 1322 665)"/><path d="M1290 690c0 60 20 100 40 140M1350 680c10 50 10 80 0 120" stroke="#4a4438" stroke-width="6" fill="none"/>
<path d="M1330 400 L1318 370 L1342 345 L1362 375 L1350 404Z" fill="#f8508a"/><path d="M1342 345 L1340 404 L1330 400 L1318 370Z" fill="#fbb0c8"/>
<g fill="#4aa82c"><rect x="1390" y="372" width="26" height="46" rx="13"/><rect x="1430" y="358" width="36" height="62" rx="18"/><rect x="1226" y="462" width="40" height="70" rx="20"/><rect x="1180" y="392" width="16" height="26" rx="8"/></g>
<path d="M1440 560c30 20 20 120-10 220c-6-80-20-160 10-220z" fill="#4a9a30"/><path d="M820 600c10 60 0 160 10 200" stroke="#4a9a30" stroke-width="5" fill="none"/>
<g stroke="#5a94f0" stroke-width="3" opacity=".5"><path d="M880 620v120M930 640v200M990 600v150M1050 650v220M1100 620v100M960 760v120"/></g>
</g>
<rect x="838" y="185" width="93" height="31" rx="3" fill="#d8a468"/><path d="M868 206l6-13 6 13z" fill="#e83040"/><circle cx="892" cy="201" r="5" fill="#fff"/><text x="901" y="206" font-size="11" fill="#fff">0/1</text>
<circle cx="1467" cy="202" r="13" fill="#182a78"/><path d="M1460 202l8-6v12z" fill="#4a8af0"/><circle cx="836" cy="862" r="13" fill="#1a1a58"/>
<rect x="1090" y="849" width="142" height="29" rx="6" fill="#16226a" fill-opacity=".9"/><path d="M1106 857v13l10-6.500z" fill="#4a8af0"/><text x="1130" y="869" font-size="12.500" fill="#4a7ae0">Run My Code</text><rect x="1448" y="849" width="44" height="29" rx="6" fill="#16226a"/>
</g>
<!-- dock -->
<rect x="98" y="925" width="1424" height="69" rx="17" fill="#3a2838" fill-opacity=".8" stroke="#fff" stroke-opacity=".15" stroke-width="1.500"/>
<rect x="106" y="934" width="52" height="52" rx="12" fill="#e6ecf4"/><path d="M118 934h16.6v52h-16.6a12 12 0 0 1 -12 -12v-28.1a12 12 0 0 1 12 -12z" fill="#2a9ef5"/><rect x="172.6" y="934" width="52" height="52" rx="12" fill="#d9d3de"/><rect x="181.4" y="942.8" width="8.8" height="8.8" rx="2.1" fill="#4cd964"/><rect x="194.4" y="942.8" width="8.8" height="8.8" rx="2.1" fill="#ffb400"/><rect x="207.4" y="942.8" width="8.8" height="8.8" rx="2.1" fill="#ff7a1a"/><rect x="181.4" y="955.8" width="8.8" height="8.8" rx="2.1" fill="#ff3b30"/><rect x="194.4" y="955.8" width="8.8" height="8.8" rx="2.1" fill="#9a9aa0"/><rect x="207.4" y="955.8" width="8.8" height="8.8" rx="2.1" fill="#ff2d78"/><rect x="181.4" y="968.8" width="8.8" height="8.8" rx="2.1" fill="#b150e0"/><rect x="194.4" y="968.8" width="8.8" height="8.8" rx="2.1" fill="#2a9ef5"/><rect x="207.4" y="968.8" width="8.8" height="8.8" rx="2.1" fill="#30d0b0"/><rect x="239.2" y="934" width="52" height="52" rx="12" fill="#f2f2f6"/><circle cx="265.2" cy="960" r="20.8" fill="#2b8cf0"/><path d="M252.2 973L262.1 956.9L268.3 963.1z" fill="#fff"/><path d="M278.2 947L262.1 956.9L268.3 963.1z" fill="#ff4040"/><rect x="305.8" y="934" width="52" height="52" rx="12" fill="#36d45a"/><ellipse cx="331.8" cy="958.4" rx="17.2" ry="14" fill="#eefaee"/><rect x="372.4" y="934" width="52" height="52" rx="12" fill="#2590f2"/><rect x="380.7" y="948.6" width="35.4" height="22.9" rx="2.6" fill="#eef2f6"/><path d="M381.8 949.6L398.4 963.1L415 949.6" fill="none" stroke="#9aa6b4" stroke-width="2.1"/><rect x="439" y="934" width="52" height="52" rx="12" fill="#7ad088"/><path d="M470.2 936.6h15.6v26h-15.6z" fill="#f0efe8"/><path d="M454.6 934h8.3v26h-8.3z" fill="#3c8cf0"/><circle cx="459.8" cy="966.2" r="10.4" fill="#2a84f0" stroke="#fff" stroke-width="2.6"/><rect x="505.6" y="934" width="52" height="52" rx="12" fill="#f7f5f7"/><ellipse cx="531.6" cy="950.1" rx="9.9" ry="5.7" fill="#ff9a30" fill-opacity=".85" transform="rotate(-90 531.6 950.1)"/><ellipse cx="538.6" cy="953" rx="9.9" ry="5.7" fill="#ffd030" fill-opacity=".85" transform="rotate(-45 538.6 953)"/><ellipse cx="541.5" cy="960" rx="9.9" ry="5.7" fill="#9bd84a" fill-opacity=".85" transform="rotate(0 541.5 960)"/><ellipse cx="538.6" cy="967" rx="9.9" ry="5.7" fill="#40c8a0" fill-opacity=".85" transform="rotate(45 538.6 967)"/><ellipse cx="531.6" cy="969.9" rx="9.9" ry="5.7" fill="#48a0f0" fill-opacity=".85" transform="rotate(90 531.6 969.9)"/><ellipse cx="524.6" cy="967" rx="9.9" ry="5.7" fill="#8a70e0" fill-opacity=".85" transform="rotate(135 524.6 967)"/><ellipse cx="521.7" cy="960" rx="9.9" ry="5.7" fill="#e060a8" fill-opacity=".85" transform="rotate(180 521.7 960)"/><ellipse cx="524.6" cy="953" rx="9.9" ry="5.7" fill="#f46048" fill-opacity=".85" transform="rotate(225 524.6 953)"/><rect x="572.2" y="934" width="52" height="52" rx="12" fill="#34cf56"/><rect x="580" y="950.6" width="23.4" height="18.7" rx="4.2" fill="#e8f6ea"/><path d="M605.5 960L616.4 951.7V968.3z" fill="#e8f6ea"/><rect x="638.8" y="934" width="52" height="52" rx="12" fill="#f8f6f8"/><path d="M638.8 946a12 12 0 0 1 12 -12h28.1a12 12 0 0 1 12 12v3.1h-52z" fill="#f2473f"/><rect x="659.6" y="957.4" width="10.4" height="18.2" fill="#3a3a3c"/><rect x="705.4" y="934" width="52" height="52" rx="12" fill="#b98a52"/><circle cx="731.4" cy="960" r="14" fill="none" stroke="#a37640" stroke-width="2.6"/><rect x="772" y="934" width="52" height="52" rx="12" fill="#f8f6f9"/><circle cx="782.4" cy="948" r="3.6" fill="#2a84f0"/><path d="M790.7 948h27" stroke="#c8c6cc" stroke-width="1.8"/><circle cx="782.4" cy="960.3" r="3.6" fill="#f0483e"/><path d="M790.7 960.3h27" stroke="#c8c6cc" stroke-width="1.8"/><circle cx="782.4" cy="972.5" r="3.6" fill="#f59a23"/><path d="M790.7 972.5h27" stroke="#c8c6cc" stroke-width="1.8"/><rect x="838.6" y="934" width="52" height="52" rx="12" fill="#f6f2ea"/><path d="M838.6 946a12 12 0 0 1 12 -12h28.1a12 12 0 0 1 12 12v2.1h-52z" fill="#fccf2f"/><rect x="905.2" y="934" width="52" height="52" rx="12" fill="#151517"/><rect x="915.6" y="954.8" width="31.2" height="11.4" fill="#e8e8ea"/><rect x="971.8" y="934" width="52" height="52" rx="12" fill="#f5405a"/><path d="M992.6 970.4V949.6L1009.2 945.4V966.2" fill="none" stroke="#fff" stroke-width="3.6"/><circle cx="989" cy="970.4" r="4.7" fill="#fff"/><circle cx="1005.6" cy="966.8" r="4.7" fill="#fff"/><rect x="1038.4" y="934" width="52" height="52" rx="12" fill="#9a45da"/><circle cx="1064.4" cy="956.9" r="14" fill="none" stroke="#fff" stroke-width="3.1"/><circle cx="1064.4" cy="955.8" r="4.7" fill="#fff"/><rect x="1061.3" y="962.1" width="6.2" height="15.6" rx="3.1" fill="#fff"/><rect x="1105" y="934" width="52" height="52" rx="12" fill="#f8f6f8"/><path d="M1115.4 944.4h11.4L1146.6 975.6h-11.4z" fill="#f23b52"/><rect x="1171.6" y="934" width="52" height="52" rx="12" fill="#1b8ff5"/><path d="M1196 945.4L1209 972.5M1200.2 945.4L1186.2 972.5M1181 965.2h33.3" stroke="#fff" stroke-width="3.9" fill="none" stroke-linecap="round"/><rect x="1238.2" y="934" width="52" height="52" rx="12" fill="#8c8c90"/><circle cx="1264.2" cy="960" r="18.7" fill="#4a4a4e" stroke="#c8c8cc" stroke-width="2.6"/><circle cx="1264.2" cy="960" r="6.2" fill="#8c8c90"/><rect x="1304.8" y="934" width="52" height="52" rx="12" fill="#f8f6f8"/><rect x="1311" y="940.2" width="39.5" height="39.5" rx="10.4" fill="#f2602e"/><path d="M1383.4 934v52" stroke="#fff" stroke-opacity=".35" stroke-width="1.6"/><path d="M1400.1 940.2h15.6l4.2 5.2h28.1v31.2h-47.8z" fill="#4fb4f2"/><rect x="1400.1" y="947.5" width="47.8" height="31.2" rx="3.1" fill="#6cc6f8"/><path d="M1474 938.2h33.3l-4.2 43.7h-25z" fill="#77757d" fill-opacity=".95"/>
</svg>
</div>
<!-- labels: window coords = global - (192,65) -->
<svg width="0" height="0" style="position:absolute"><defs><clipPath id="avc"><circle cx="20" cy="20" r="19.500"/></clipPath><filter id="avb"><feGaussianBlur stdDeviation=".7"/></filter></defs></svg>
<div class="lbl" style="left:0;top:0">
<div class="dot" style="left:115.700px;top:371.500px;background:#f9bd2e"></div>
<svg class="abs" style="left:139px;top:357.500px" width="40" height="40" viewBox="0 0 40 40"><g clip-path="url(#avc)"><g filter="url(#avb)"><rect width="40" height="40" fill="#4a4820"/><circle cx="33" cy="8" r="9" fill="#66662a"/><path d="M5 40C5 20 8 7 20 5C32 6 35 22 34 40Z" fill="#dcc088"/><path d="M12 9c3-5 12-5 16 0l-8 3z" fill="#ece2c8"/><ellipse cx="20.500" cy="23.500" rx="10" ry="12.500" fill="#f4ceb4"/><path d="M10.500 22c0-9 4-12 10-12.500c6 .5 10 4 10 12.500c-2-6-5-8-10-8.500c-5 .5-8 3-10 8.500z" fill="#dcc088"/><path d="M15 20.500h4M22.500 20.500h4" stroke="#8a6a54" stroke-width="1.100"/><path d="M15.500 28.500c3 2.400 7 2.400 10 0c-1.500 3.600-8.500 3.600-10 0z" fill="#fff"/><circle cx="35.500" cy="22.500" r="4.400" fill="#e8e4e8"/><path d="M14 40c0-3 2-5 6.500-5s6.500 2 6.500 5z" fill="#eebfa2"/></g></g></svg>
<span class="nm" style="left:186px;top:357.500px">Amy’s MacBook Pro</span><span class="us" style="left:187.500px;top:377.800px">afrost</span>
<div class="dot" style="left:522px;top:371.500px;background:#f4554d"></div>
<svg class="abs" style="left:544.700px;top:357.500px" width="40" height="40" viewBox="0 0 40 40"><g clip-path="url(#avc)"><g filter="url(#avb)"><rect width="40" height="40" fill="#2c4a30"/><circle cx="5" cy="12" r="9" fill="#4a6a3a"/><circle cx="36" cy="27" r="6" fill="#6a9a5a"/><path d="M9 18C8.500 7 14 3 20.500 3S32.500 7 32 18l-2 5H11z" fill="#17120f"/><ellipse cx="20.500" cy="21" rx="10" ry="12.500" fill="#cc9870"/><path d="M10.500 16c2-6 17-7 20 0c-4-3.500-16-3.500-20 0z" fill="#17120f"/><path d="M14.500 18.500h4.500M22 18.500h4.500" stroke="#2a1a12" stroke-width="1.300"/><path d="M15 26.500c3.500 2.600 7.500 2.600 11 0c-1.500 4.400-9.500 4.400-11 0z" fill="#fff"/><path d="M2 40c1-5 7-6.500 12-7l6.500 3 6.500-3c5 .5 11 2 12 7z" fill="#2a2c3a"/><path d="M15 33l5.500 5 5.500-5c-3 1-8 1-11 0z" fill="#c08860"/></g></g></svg>
<span class="nm" style="left:591.700px;top:357.500px">Ben’s MacBook Pro</span><span class="us" style="left:593.300px;top:377.800px">bstott</span>
<div class="dot" style="left:920.300px;top:371.500px;background:#f9bd2e"></div>
<svg class="abs" style="left:940.800px;top:357.500px" width="40" height="40" viewBox="0 0 40 40"><g clip-path="url(#avc)"><g filter="url(#avb)"><rect width="40" height="40" fill="#e8e2de"/><path d="M8 19C6.500 7 13 3 20.500 3S34.500 7 33 19l-2 4H10z" fill="#1e1814"/><ellipse cx="20.300" cy="20.500" rx="10" ry="12" fill="#c89a74"/><path d="M10.300 21c1 10 5.500 14 10 14s9-4 10-14c-1 5-3.500 6-10 6s-9-1-10-6z" fill="#2a201a"/><path d="M10.300 15c3-6 16.500-6.500 20 0c-3.500-3-16.500-3-20 0z" fill="#1e1814"/><path d="M14.500 18h4.500M21.800 18h4.500" stroke="#1e1814" stroke-width="1.400"/><path d="M16.500 27.500c2.400 1.600 5.400 1.600 7.800 0c-1.200 2.400-6.600 2.400-7.800 0z" fill="#f4ece8"/><path d="M2 40c1-4 6-6 11-6.500l7.300 2.500 7.300-2.500c5 .5 10 2.500 11 6.500z" fill="#f4f2f0"/></g></g></svg>
<span class="nm" style="left:988.700px;top:357.500px">Bryan’s MacBook Air</span><span class="us" style="left:991px;top:377.800px">balvarez</span>
</div>
<div class="lbl" style="left:0;top:358px">
<div class="dot" style="left:104.800px;top:373.500px;background:#f9bd2e"></div>
<svg class="abs" style="left:128.300px;top:357.400px" width="40" height="40" viewBox="0 0 40 40"><g clip-path="url(#avc)"><g filter="url(#avb)"><rect width="40" height="40" fill="#77706e"/><path d="M4 40C3 18 7 3.500 20 3C33 3.500 37 18 36 40Z" fill="#15100e"/><ellipse cx="20" cy="22" rx="10.800" ry="13.500" fill="#ecc8b0"/><path d="M9 18c2-9 6-11 12-11.500c5 1 9 4 10 11.500c-3-5-6-7.500-10-7.500c-5 1-9 4-12 7.500z" fill="#15100e"/><path d="M14.500 17.500h4M22 17.500h4" stroke="#3a2a24" stroke-width="1.200"/><path d="M15 27.500c3 2.600 7 2.600 10 0c-1.500 4-8.500 4-10 0z" fill="#fff"/><path d="M14 40c0-3 2-4.500 6-4.500s6 1.500 6 4.500z" fill="#e0b89e"/></g></g></svg>
<span class="nm" style="left:175.400px;top:357.500px">Cynthia’s MacBook Air</span><span class="us" style="left:177px;top:377.800px">cyao</span>
<div class="dot" style="left:509.500px;top:373.500px;background:#f4554d"></div>
<svg class="abs" style="left:530.800px;top:357.400px" width="40" height="40" viewBox="0 0 40 40"><g clip-path="url(#avc)"><g filter="url(#avb)"><rect width="40" height="40" fill="#dedad8"/><ellipse cx="20" cy="18.500" rx="10.600" ry="14" fill="#5c3c2e"/><path d="M9.800 14c1-8 6-10.500 10.200-10.500s9.200 2.500 10.200 10.500c-2-4-6-6-10.200-6s-8.200 2-10.200 6z" fill="#2a1c16"/><ellipse cx="20" cy="14" rx="6" ry="3.500" fill="#7a5442" opacity=".7"/><path d="M14.500 17h4M21.500 17h4" stroke="#20140f" stroke-width="1.300"/><path d="M14 24.500c3.500 2.800 8.500 2.800 12 0c-1.500 5-10.500 5-12 0z" fill="#fff"/><path d="M2 40c1-5 6-7.500 11-8l7 3 7-3c5 .5 10 3 11 8z" fill="#f4f2f0"/><path d="M14 31l6 5 6-5c-3 1.500-9 1.500-12 0z" fill="#4a2e22"/></g></g></svg>
<span class="nm" style="left:578.700px;top:357.500px">Duncan’s MacBook Pro</span><span class="us" style="left:580.500px;top:377.800px">dkerr</span>
<div class="dot" style="left:910.800px;top:373.500px;background:#f4554d"></div>
<svg class="abs" style="left:932.200px;top:357.400px" width="40" height="40" viewBox="0 0 40 40"><g clip-path="url(#avc)"><g filter="url(#avb)"><rect width="40" height="40" fill="#e0d8d4"/><path d="M3 40C2 18 7 3.500 20 3C33 3.500 38 20 37 40Z" fill="#3a241a"/><ellipse cx="19.500" cy="22" rx="10.500" ry="13.500" fill="#d4a484"/><path d="M8.500 19c1-9 6-11.500 12-12c5 1 9 4 10 11c-2-4-5-7-8-8c-6 1-10 4-14 9z" fill="#3a241a"/><path d="M14 18.500h4.500M21.500 18.500h4.500" stroke="#2a1a14" stroke-width="1.300"/><path d="M14.500 28c3 2.600 7 2.600 10 0c-1.500 4-8.500 4-10 0z" fill="#fff"/><path d="M28 12c5 7 6 18 4 28h6V18z" fill="#24150f"/><path d="M13.500 40c0-3 2-4.500 6-4.500s6 1.500 6 4.500z" fill="#c49474"/></g></g></svg>
<span class="nm" style="left:979.200px;top:357.500px">Shannon’s MacBook Pro</span><span class="us" style="left:981px;top:377.800px">sserbe</span>
</div>
</div>
<div id="dock"></div>
<svg class="abs" style="left:60px;top:928px" width="1506" height="82" viewBox="60 928 1506 82">
<defs>
<linearGradient id="dgF" x1="0" y1="0" x2="0" y2="1"><stop offset="0" stop-color="#27b4fa"/><stop offset="1" stop-color="#1a7cf0"/></linearGradient>
<linearGradient id="dgW" x1="0" y1="0" x2="0" y2="1"><stop offset="0" stop-color="#fdfdfe"/><stop offset="1" stop-color="#e2e0e6"/></linearGradient>
<linearGradient id="dgG" x1="0" y1="0" x2="0" y2="1"><stop offset="0" stop-color="#5ee873"/><stop offset="1" stop-color="#1fc540"/></linearGradient>
<linearGradient id="dgB" x1="0" y1="0" x2="0" y2="1"><stop offset="0" stop-color="#1f9cf8"/><stop offset="1" stop-color="#1a74ea"/></linearGradient>
<linearGradient id="dgM" x1="0" y1="0" x2="0" y2="1"><stop offset="0" stop-color="#1a8cf6"/><stop offset="1" stop-color="#30b4f8"/></linearGradient>
<linearGradient id="dgR" x1="0" y1="0" x2="0" y2="1"><stop offset="0" stop-color="#fb5c74"/><stop offset="1" stop-color="#f2283e"/></linearGradient>
<linearGradient id="dgP" x1="0" y1="0" x2="0" y2="1"><stop offset="0" stop-color="#c86af0"/><stop offset="1" stop-color="#7a2ec0"/></linearGradient>
<linearGradient id="dgS" x1="0" y1="0" x2="0" y2="1"><stop offset="0" stop-color="#b4b4b8"/><stop offset="1" stop-color="#707076"/></linearGradient>
<linearGradient id="dgA" x1="0" y1="0" x2="0" y2="1"><stop offset="0" stop-color="#22b0fa"/><stop offset="1" stop-color="#1a70e8"/></linearGradient>
<linearGradient id="dgL" x1="0" y1="0" x2="0" y2="1"><stop offset="0" stop-color="#e4d8ec"/><stop offset="1" stop-color="#cdbfe0"/></linearGradient>
<linearGradient id="dgT" x1="0" y1="0" x2="0" y2="1"><stop offset="0" stop-color="#2c2c2e"/><stop offset="1" stop-color="#0c0c0e"/></linearGradient>
<linearGradient id="dgC" x1="0" y1="0" x2="0" y2="1"><stop offset="0" stop-color="#c0915a"/><stop offset="1" stop-color="#a87a44"/></linearGradient>
<linearGradient id="dgD" x1="0" y1="0" x2="0" y2="1"><stop offset="0" stop-color="#6ac8f8"/><stop offset="1" stop-color="#3aa4ec"/></linearGradient>
<linearGradient id="dgMsg" x1="0" y1="0" x2="0" y2="1"><stop offset="0" stop-color="#fbfdf8"/><stop offset="1" stop-color="#cfe4cc"/></linearGradient>
<clipPath id="dcF"><rect x="72" y="939.700" width="53" height="53" rx="12"/></clipPath>
<clipPath id="dcMap"><rect x="422" y="939.700" width="53" height="53" rx="12"/></clipPath>
<clipPath id="dcCal"><rect x="631.300" y="939.700" width="53" height="53" rx="12"/></clipPath>
<clipPath id="dcNote"><rect x="841" y="939.700" width="53" height="53" rx="12"/></clipPath>
<filter id="dsh" x="-10%" y="-10%" width="120%" height="130%"><feDropShadow dx="0" dy="1" stdDeviation="1.200" flood-color="#1a0050" flood-opacity=".3"/></filter>
</defs>
<g filter="url(#dsh)">
<!-- Finder -->
<g clip-path="url(#dcF)"><rect x="72" y="939.700" width="53" height="53" fill="url(#dgF)"/><path d="M101 939.700h24v53h-22.500c-2.200-8.500-3-16-3-24h-5.800c.6-12 3.200-21 7.300-29z" fill="url(#dgW)"/></g>
<path d="M84.600 955.500v4.200M110.800 955.500v4.200" stroke="#1d2a44" stroke-width="1.900" stroke-linecap="round"/><path d="M81.500 975.200c9.500 7.500 24.500 7.500 33.600 0" fill="none" stroke="#1d2a44" stroke-width="1.700" stroke-linecap="round"/>
<!-- Launchpad -->
<rect x="142" y="939.700" width="53" height="53" rx="12" fill="url(#dgL)"/>
<g><rect x="150.500" y="948.500" width="9.800" height="9.800" rx="2.400" fill="#42d84c"/><rect x="163.600" y="948.500" width="9.800" height="9.800" rx="2.400" fill="#fdb81c"/><rect x="176.700" y="948.500" width="9.800" height="9.800" rx="2.400" fill="#f98a1c"/><rect x="150.500" y="961.500" width="9.800" height="9.800" rx="2.400" fill="#ee2a22"/><rect x="163.600" y="961.500" width="9.800" height="9.800" rx="2.400" fill="#a8a4a8"/><rect x="176.700" y="961.500" width="9.800" height="9.800" rx="2.400" fill="#f83a68"/><rect x="150.500" y="974.500" width="9.800" height="9.800" rx="2.400" fill="#b446e0"/><rect x="163.600" y="974.500" width="9.800" height="9.800" rx="2.400" fill="#1e9cf8"/><rect x="176.700" y="974.500" width="9.800" height="9.800" rx="2.400" fill="#1ecfa0"/></g>
<!-- Safari -->
<rect x="211.700" y="939.700" width="53" height="53" rx="12" fill="url(#dgW)"/><circle cx="238.200" cy="966.200" r="22.300" fill="url(#dgB)"/><circle cx="238.200" cy="966.200" r="19.800" fill="none" stroke="#d8ecfc" stroke-width="2.600" stroke-dasharray=".7 1.900" opacity=".85"/>
<path d="M254 950.500 235.800 963.800 240.600 968.600z" fill="#f0443c"/><path d="M222.400 982 235.800 963.800 240.600 968.600z" fill="#f4f4f6"/>
<!-- Messages -->
<rect x="282" y="939.700" width="53" height="53" rx="12" fill="url(#dgG)"/><path d="M308.500 948.800c10.800 0 19.500 7 19.500 15.800s-8.700 15.800-19.500 15.800c-2.300 0-4.500-.3-6.500-.9c-1.700 1.600-4 2.600-6.700 2.700c1.400-1.400 2.200-3.100 2.400-4.900c-5.300-2.800-8.700-7.400-8.700-12.700c0-8.800 8.700-15.800 19.500-15.800z" fill="url(#dgMsg)"/>
<!-- Mail -->
<rect x="352" y="939.700" width="53" height="53" rx="12" fill="url(#dgM)"/><rect x="359.800" y="953.800" width="37.500" height="25" rx="3.400" fill="#f0f2f6"/><path d="M361 955.500 378.500 969 396 955.500" fill="none" stroke="#a8b0bc" stroke-width="1.500"/><path d="M361 977.500 373 966M396 977.500 384 966" stroke="#c4cad4" stroke-width="1.200"/>
<!-- Maps -->
<g clip-path="url(#dcMap)"><rect x="422" y="939.700" width="53" height="53" fill="#78d48c"/><path d="M452 939.700h23v22l-10 6-13-9z" fill="#e8ece4"/><circle cx="468" cy="944" r="9" fill="none" stroke="#c8ccc4" stroke-width="3.500"/><path d="M422 975l12-8 10 25.700h-22z" fill="#f4a8c0"/><path d="M448 975l27-14v12l-20 19.700h-8z" fill="#f4f0e4"/><path d="M458 992.700l17-16v16z" fill="#f8cc3c"/><rect x="437.500" y="939.700" width="8.600" height="24" fill="#2a84ec"/><rect x="434.800" y="939.700" width="2.700" height="24" fill="#f4f4f4"/><rect x="446.100" y="939.700" width="2.700" height="24" fill="#f4f4f4"/></g>
<circle cx="441.800" cy="972.200" r="10.800" fill="#2a84ec" stroke="#f4f6fa" stroke-width="2.200"/><path d="M441.800 964.200 447.200 978.200 441.800 975 436.400 978.200z" fill="#fff"/>
<!-- Photos -->
<rect x="491.500" y="939.700" width="53" height="53" rx="12" fill="url(#dgW)"/>
<g opacity=".88"><ellipse cx="518" cy="955.200" rx="5.800" ry="9.700" fill="#f8a02c"/><ellipse cx="518" cy="977.200" rx="5.800" ry="9.700" fill="#46a8f0"/><ellipse cx="507" cy="966.200" rx="9.700" ry="5.800" fill="#c85ab4"/><ellipse cx="529" cy="966.200" rx="9.700" ry="5.800" fill="#8cd04a"/><ellipse cx="510.200" cy="958.400" rx="5.800" ry="9.700" fill="#f2584c" transform="rotate(-45 510.200 958.400)"/><ellipse cx="525.800" cy="958.400" rx="5.800" ry="9.700" fill="#f4d02c" transform="rotate(45 525.800 958.400)"/><ellipse cx="510.200" cy="974" rx="5.800" ry="9.700" fill="#8a6ae0" transform="rotate(45 510.200 974)"/><ellipse cx="525.800" cy="974" rx="5.800" ry="9.700" fill="#3cc8a0" transform="rotate(-45 525.800 974)"/></g>
<!-- FaceTime -->
<rect x="561.200" y="939.700" width="53" height="53" rx="12" fill="url(#dgG)"/><rect x="568.600" y="956" width="26.500" height="20.600" rx="5.500" fill="url(#dgMsg)"/><path d="M596.800 963.500 604.800 957.600c1.100-.8 2.300-.2 2.300 1.100v15.200c0 1.300-1.200 1.900-2.300 1.100l-8-5.900z" fill="url(#dgMsg)"/>
<!-- Calendar -->
<g clip-path="url(#dcCal)"><rect x="631.300" y="939.700" width="53" height="53" fill="url(#dgW)"/><rect x="631.300" y="939.700" width="53" height="15.600" fill="#f44840"/></g><text x="657.800" y="952" font-size="10.500" font-weight="700" fill="#fff" text-anchor="middle" letter-spacing=".2">OCT</text><text x="657.800" y="985" font-size="31" fill="#3a3a3c" text-anchor="middle">4</text>
<!-- Contacts -->
<rect x="705" y="947" width="51" height="9" rx="2" fill="#8ab4e8"/><rect x="705" y="958" width="51" height="9" rx="2" fill="#7ec86a"/><rect x="705" y="969" width="51" height="9" rx="2" fill="#f4a23c"/><rect x="705" y="979" width="51" height="8" rx="2" fill="#e8685a"/>
<rect x="701.500" y="939.700" width="51.500" height="53" rx="11" fill="url(#dgC)"/><circle cx="727.400" cy="966.200" r="15" fill="none" stroke="#96693a" stroke-width="1.800"/><circle cx="727.400" cy="961.200" r="5.300" fill="#9a6c3c"/><path d="M716.800 976.600c2-6 7-7.800 10.600-7.800s8.600 1.800 10.600 7.800c-5.800 5.800-15.400 5.800-21.200 0z" fill="#9a6c3c"/>
<!-- Reminders -->
<rect x="771.600" y="939.700" width="53" height="53" rx="12" fill="url(#dgW)"/>
<g><circle cx="782" cy="953" r="4" fill="#2a84f0" stroke="#fff" stroke-width="1.200"/><circle cx="782" cy="953" r="4.900" fill="none" stroke="#2a84f0" stroke-width=".6"/><circle cx="782" cy="966.200" r="4" fill="#f0443c" stroke="#fff" stroke-width="1.200"/><circle cx="782" cy="966.200" r="4.900" fill="none" stroke="#f0443c" stroke-width=".6"/><circle cx="782" cy="979.400" r="4" fill="#f59a1e" stroke="#fff" stroke-width="1.200"/><circle cx="782" cy="979.400" r="4.900" fill="none" stroke="#f59a1e" stroke-width=".6"/><path d="M791 953h28M791 966.200h28M791 979.400h28" stroke="#c6c4ca" stroke-width="1.100"/></g>
<!-- Notes -->
<g clip-path="url(#dcNote)"><rect x="841" y="939.700" width="53" height="53" fill="#f6f2ea"/><rect x="841" y="939.700" width="53" height="12.800" fill="#fccc2a"/><rect x="841" y="952.500" width="53" height="1.200" fill="#e8d8a0"/><path d="M841 965.500h53M841 977h53" stroke="#dcd8d0" stroke-width="1"/></g>
<!-- TV -->
<rect x="911" y="939.700" width="53" height="53" rx="12" fill="url(#dgT)"/><path d="M929.500 961.200c-.1 3.200 2.700 4.300 2.700 4.300c-.6 1.900-2.400 5.900-4.700 5.900c-1.200 0-1.600-.8-3-.8s-1.900.8-3 .8c-2.300 0-5.300-5.600-4.500-9.800c.5-2.800 2.600-4.400 4.700-4.400c1.300 0 2.300.9 3.100.9s2.100-1 3.700-.9c1.300.1 2.600.7 3.400 1.900c-1.500.9-2.400 1.500-2.400 3.100zM927 954c.6-.8 1.100-1.900.9-3c-1 .1-2.200.7-2.800 1.500c-.6.700-1.100 1.800-.9 2.900c1 0 2.100-.6 2.800-1.400z" fill="#f4f4f6"/><text x="935.800" y="972.500" font-size="21" font-weight="700" fill="#f4f4f6" letter-spacing="-.2">tv</text>
<!-- Music -->
<rect x="981.300" y="939.700" width="53" height="53" rx="12" fill="url(#dgR)"/><path d="M1001 954.700 1018.500 950.800v22.500a4.800 4 0 1 1-2.600-3.500v-12.600l-12.300 2.800v16a4.800 4 0 1 1-2.600-3.500z" fill="#fff"/>
<!-- Podcasts -->
<rect x="1051.200" y="939.700" width="53" height="53" rx="12" fill="url(#dgP)"/><g fill="none" stroke="#fff" stroke-width="2.100" stroke-linecap="round"><path d="M1066.500 977.500a15.300 15.300 0 1 1 22.400 0"/><path d="M1071.400 972.300a9 9 0 1 1 12.600 0"/></g><circle cx="1077.700" cy="964.200" r="3.900" fill="#fff"/><path d="M1073.900 973.500c0-2.600 1.700-3.700 3.800-3.700s3.800 1.100 3.800 3.700l-1.400 9.600c-.2 1.500-1.100 2.200-2.400 2.200s-2.200-.7-2.400-2.200z" fill="#fff"/>
<!-- News -->
<rect x="1121.300" y="939.700" width="53" height="53" rx="12" fill="url(#dgW)"/><path d="M1131 949.700h13l21 32.500v.3h-13l-21-32.500z" fill="#f43a50"/><path d="M1131 959.500l15 23h-15zM1165 972.700l-15-23h15z" fill="#f0566a"/>
<!-- App Store -->
<rect x="1191.500" y="939.700" width="53" height="53" rx="12" fill="url(#dgA)"/><g stroke="#f4f8fe" stroke-width="3.300" stroke-linecap="round" fill="none"><path d="M1216.300 951.500 1230.800 977M1219.800 951.500 1205.300 977M1202.200 971.200h31.600"/></g>
<!-- Settings -->
<rect x="1261" y="939.700" width="53" height="53" rx="12" fill="url(#dgS)"/><circle cx="1287.500" cy="966.200" r="21" fill="#3e3e42"/><circle cx="1287.500" cy="966.200" r="19.800" fill="none" stroke="#b8b8bc" stroke-width="2.800" stroke-dasharray="2 1.300"/><circle cx="1287.500" cy="966.200" r="15.500" fill="#8e8e92"/><circle cx="1287.500" cy="966.200" r="13.400" fill="#4a4a4e"/><g stroke="#9a9a9e" stroke-width="2.600"><path d="M1287.500 966.200v-13.400M1287.500 966.200l11.600 6.700M1287.500 966.200l-11.600 6.700"/></g><circle cx="1287.500" cy="966.200" r="4.200" fill="#9a9a9e"/><circle cx="1287.500" cy="966.200" r="2" fill="#4a4a4e"/>
<!-- Remote Desktop -->
<rect x="1331.600" y="941" width="48" height="46" rx="9.500" fill="#0a0a0c"/><rect x="1334.600" y="944" width="42" height="40" rx="7" fill="url(#dgM)"/>
<g><path d="M1349.500 972c-1.500 6-2.500 12-2.300 18.500c0 1.800 1 2.700 2.700 2.700h10.500c1.700 0 2.600-.9 2.600-2.700v-18.500c0-3-2-5-5.500-5h-2.500c-3.500 0-4.800 2-5.500 5z" fill="#3a3c40"/><path d="M1381.500 972c1.500 6 2.500 12 2.300 18.500c0 1.800-1 2.700-2.700 2.700h-10.500c-1.700 0-2.600-.9-2.600-2.700v-18.500c0-3 2-5 5.500-5h2.500c3.500 0 4.800 2 5.500 5z" fill="#3a3c40"/><rect x="1361.500" y="973" width="8" height="9" fill="#2a2c30"/><rect x="1352.500" y="962.300" width="8.500" height="6" rx="1.500" fill="#4a4c52"/><rect x="1370" y="962.300" width="8.500" height="6" rx="1.500" fill="#4a4c52"/><path d="M1349 984h13.500M1368.500 984h13.500" stroke="#5a5c62" stroke-width="1.200"/></g>
<!-- Downloads folder -->
<path d="M1426.500 947.500c0-2.400 1.300-3.800 3.700-3.800h13.500c1.800 0 2.800.6 3.700 1.900l1.600 2.300c.6.900 1.300 1.200 2.600 1.200h33.200c2.400 0 3.700 1.400 3.700 3.800v36c0 2.400-1.300 3.800-3.700 3.800h-54.600c-2.400 0-3.700-1.400-3.700-3.800z" fill="#42a8ea"/><rect x="1426.500" y="952.800" width="62" height="40" rx="4" fill="url(#dgD)"/><circle cx="1457.500" cy="972.500" r="10.200" fill="#2a8cd4"/><path d="M1457.500 966.500v11M1453 973.500l4.500 4.500 4.500-4.500" stroke="#8ad0f8" stroke-width="1.900" fill="none" stroke-linecap="round" stroke-linejoin="round"/>
<!-- Trash -->
<path d="M1505 941.500c0-1.500 9.500-3.300 22.500-3.300s22.500 1.800 22.500 3.300l-4.600 49.500c-.3 2.500-8 3.700-17.900 3.700s-17.600-1.200-17.900-3.700z" fill="#e8e2ee" fill-opacity=".92"/><ellipse cx="1527.500" cy="941.800" rx="22.500" ry="3.700" fill="#cfc4dc"/><ellipse cx="1527.500" cy="942.200" rx="20.500" ry="2.700" fill="#b8a8cc"/><path d="M1512 950l24 36M1542 950l-22 34" stroke="#d4cce0" stroke-width="1" opacity=".8"/>
</g>
<path d="M1407.900 940v58" stroke="#3c1c8a" stroke-opacity=".55" stroke-width="1.200"/>
<circle cx="98.400" cy="1005.700" r="2" fill="#1a0a50"/><circle cx="1355.400" cy="1005.700" r="2" fill="#1a0a50"/>
</svg>
<div id="wms">
<div class="wm" style="left:-217.0px;top:-190.0px">Hi小淘，淘你想淘！</div>
<div class="wm" style="left:65.0px;top:-190.0px">Hi小淘，淘你想淘！</div>
<div class="wm" style="left:347.5px;top:-190.0px">Hi小淘，淘你想淘！</div>
<div class="wm" style="left:630.0px;top:-190.0px">Hi小淘，淘你想淘！</div>
<div class="wm" style="left:912.5px;top:-190.0px">Hi小淘，淘你想淘！</div>
<div class="wm" style="left:1195.0px;top:-190.0px">Hi小淘，淘你想淘！</div>
<div class="wm" style="left:1477.5px;top:-190.0px">Hi小淘，淘你想淘！</div>
<div class="wm" style="left:-217.0px;top:90.0px">Hi小淘，淘你想淘！</div>
<div class="wm" style="left:65.0px;top:90.0px">Hi小淘，淘你想淘！</div>
<div class="wm" style="left:347.5px;top:90.0px">Hi小淘，淘你想淘！</div>
<div class="wm" style="left:630.0px;top:90.0px">Hi小淘，淘你想淘！</div>
<div class="wm" style="left:912.5px;top:90.0px">Hi小淘，淘你想淘！</div>
<div class="wm" style="left:1195.0px;top:90.0px">Hi小淘，淘你想淘！</div>
<div class="wm" style="left:1477.5px;top:90.0px">Hi小淘，淘你想淘！</div>
<div class="wm" style="left:-217.0px;top:370.0px">Hi小淘，淘你想淘！</div>
<div class="wm" style="left:65.0px;top:370.0px">Hi小淘，淘你想淘！</div>
<div class="wm" style="left:347.5px;top:370.0px">Hi小淘，淘你想淘！</div>
<div class="wm" style="left:630.0px;top:370.0px">Hi小淘，淘你想淘！</div>
<div class="wm" style="left:912.5px;top:370.0px">Hi小淘，淘你想淘！</div>
<div class="wm" style="left:1195.0px;top:370.0px">Hi小淘，淘你想淘！</div>
<div class="wm" style="left:1477.5px;top:370.0px">Hi小淘，淘你想淘！</div>
<div class="wm" style="left:-217.0px;top:650.0px">Hi小淘，淘你想淘！</div>
<div class="wm" style="left:65.0px;top:650.0px">Hi小淘，淘你想淘！</div>
<div class="wm" style="left:347.5px;top:650.0px">Hi小淘，淘你想淘！</div>
<div class="wm" style="left:630.0px;top:650.0px">Hi小淘，淘你想淘！</div>
<div class="wm" style="left:912.5px;top:650.0px">Hi小淘，淘你想淘！</div>
<div class="wm" style="left:1195.0px;top:650.0px">Hi小淘，淘你想淘！</div>
<div class="wm" style="left:1477.5px;top:650.0px">Hi小淘，淘你想淘！</div>
<div class="wm" style="left:-217.0px;top:930.0px">Hi小淘，淘你想淘！</div>
<div class="wm" style="left:65.0px;top:930.0px">Hi小淘，淘你想淘！</div>
<div class="wm" style="left:347.5px;top:930.0px">Hi小淘，淘你想淘！</div>
<div class="wm" style="left:630.0px;top:930.0px">Hi小淘，淘你想淘！</div>
<div class="wm" style="left:912.5px;top:930.0px">Hi小淘，淘你想淘！</div>
<div class="wm" style="left:1195.0px;top:930.0px">Hi小淘，淘你想淘！</div>
<div class="wm" style="left:1477.5px;top:930.0px">Hi小淘，淘你想淘！</div>
</div>
</body>
</html>
